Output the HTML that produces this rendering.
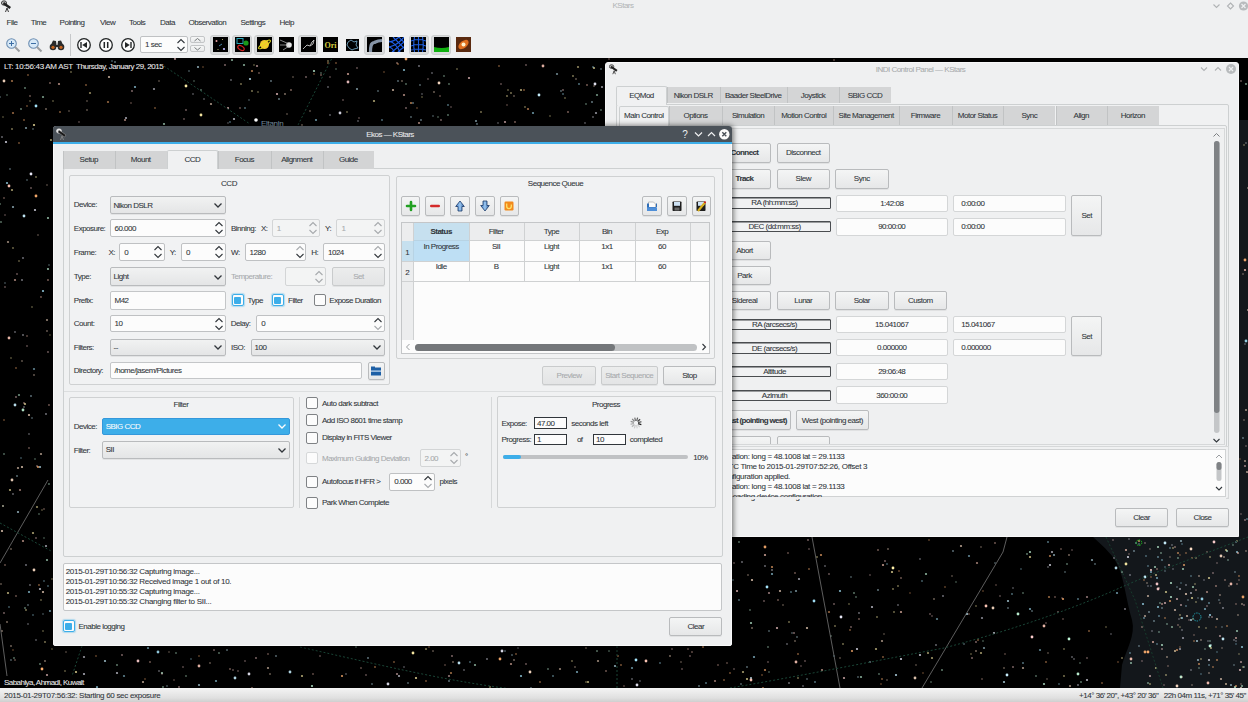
<!DOCTYPE html><html><head><meta charset="utf-8"><style>
html,body{margin:0;padding:0;}
body{width:1248px;height:702px;overflow:hidden;position:relative;background:#000;font-family:"Liberation Sans",sans-serif;font-size:8px;color:#31363b;}
div{position:absolute;}
.t{white-space:nowrap;line-height:12px;height:12px;letter-spacing:-0.5px;-webkit-text-stroke-width:0.08px;}
svg.a{position:absolute;}
</style></head><body>
<svg class="a" style="left:0;top:58px" width="1248" height="630" viewBox="0 58 1248 630"><rect x="0" y="58" width="1248" height="630" fill="#000"/><path d="M1093,520 L1093,537 C1105,548 1114,556 1118,566 C1124,578 1126,600 1132,620 C1136,635 1126,650 1122,665 L1120,688 L1248,688 L1248,520 Z" fill="#13171b"/><rect x="1239" y="120" width="9" height="420" fill="#13171b"/><circle cx="47" cy="331" r="0.9" fill="#ffe0c8" opacity="0.44"/><circle cx="234" cy="119" r="1.1" fill="#f0f0ff" opacity="0.74"/><circle cx="526" cy="664" r="0.9" fill="#ffd0d0" opacity="0.44"/><circle cx="1048" cy="653" r="0.9" fill="#ffe0c8" opacity="0.32"/><circle cx="1239" cy="576" r="0.9" fill="#ffb070" opacity="0.52"/><circle cx="433" cy="651" r="0.9" fill="#ffe0c8" opacity="0.42"/><circle cx="882" cy="679" r="0.9" fill="#ffb070" opacity="0.54"/><circle cx="328" cy="61" r="0.9" fill="#fff0a8" opacity="0.45"/><circle cx="1072" cy="657" r="0.9" fill="#f0f0ff" opacity="0.41"/><circle cx="1087" cy="658" r="0.9" fill="#ffd0d0" opacity="0.40"/><circle cx="498" cy="123" r="0.9" fill="#f0f0ff" opacity="0.35"/><circle cx="670" cy="656" r="0.9" fill="#ffe0c8" opacity="0.52"/><circle cx="1059" cy="684" r="0.9" fill="#a8e8ff" opacity="0.38"/><circle cx="256" cy="658" r="0.9" fill="#ffd0d0" opacity="0.53"/><circle cx="765" cy="555" r="1.1" fill="#ffc8b8" opacity="0.79"/><circle cx="444" cy="76" r="0.9" fill="#c8ffe0" opacity="0.42"/><circle cx="2" cy="631" r="0.9" fill="#ffe0c8" opacity="0.51"/><circle cx="174" cy="680" r="0.9" fill="#ffc8b8" opacity="0.31"/><circle cx="1032" cy="611" r="0.9" fill="#c8f0ff" opacity="0.43"/><circle cx="23" cy="335" r="0.9" fill="#f0f0ff" opacity="0.49"/><circle cx="969" cy="614" r="0.9" fill="#ffc8b8" opacity="0.37"/><circle cx="597" cy="651" r="0.9" fill="#c8ffe0" opacity="0.53"/><circle cx="881" cy="684" r="0.9" fill="#ffb070" opacity="0.35"/><circle cx="24" cy="407" r="0.9" fill="#f0f0ff" opacity="0.40"/><circle cx="1023" cy="593" r="0.9" fill="#c8ffe0" opacity="0.40"/><circle cx="336" cy="69" r="0.9" fill="#c8ffe0" opacity="0.32"/><circle cx="201" cy="90" r="0.9" fill="#c8ffe0" opacity="0.46"/><circle cx="1241" cy="81" r="0.9" fill="#ffd0d0" opacity="0.44"/><circle cx="858" cy="677" r="0.9" fill="#c8f0ff" opacity="0.40"/><circle cx="434" cy="92" r="0.9" fill="#ffe0c8" opacity="0.46"/><circle cx="5" cy="287" r="0.9" fill="#ffd0d0" opacity="0.38"/><circle cx="43" cy="614" r="0.9" fill="#c8f0ff" opacity="0.30"/><circle cx="330" cy="115" r="0.9" fill="#f0f0ff" opacity="0.40"/><circle cx="105" cy="661" r="1.1" fill="#c8f0ff" opacity="0.75"/><circle cx="894" cy="612" r="0.9" fill="#fff0a8" opacity="0.48"/><circle cx="20" cy="490" r="1.1" fill="#ffc8b8" opacity="0.58"/><circle cx="563" cy="90" r="0.9" fill="#ffd0d0" opacity="0.47"/><circle cx="923" cy="673" r="0.9" fill="#ffb070" opacity="0.32"/><circle cx="606" cy="671" r="0.9" fill="#ffc8b8" opacity="0.47"/><circle cx="249" cy="674" r="1.4" fill="#f0f0ff" opacity="0.89"/><circle cx="1241" cy="684" r="0.9" fill="#ffc8b8" opacity="0.32"/><circle cx="199" cy="656" r="0.9" fill="#ffb070" opacity="0.38"/><circle cx="2" cy="531" r="1.1" fill="#ffe0c8" opacity="0.83"/><circle cx="244" cy="65" r="1.1" fill="#c8ffe0" opacity="0.66"/><circle cx="490" cy="687" r="0.9" fill="#fff0a8" opacity="0.53"/><circle cx="943" cy="596" r="0.9" fill="#f0f0ff" opacity="0.51"/><circle cx="356" cy="647" r="0.9" fill="#c8ffe0" opacity="0.41"/><circle cx="36" cy="538" r="0.9" fill="#ffd0d0" opacity="0.44"/><circle cx="357" cy="89" r="1.1" fill="#c8f0ff" opacity="0.60"/><circle cx="252" cy="71" r="1.1" fill="#ffb070" opacity="0.67"/><circle cx="422" cy="97" r="0.9" fill="#fff0a8" opacity="0.33"/><circle cx="1191" cy="593" r="1.1" fill="#f0f0ff" opacity="0.59"/><circle cx="1004" cy="668" r="0.9" fill="#ffe0c8" opacity="0.40"/><circle cx="1157" cy="578" r="1.1" fill="#a8e8ff" opacity="0.62"/><circle cx="808" cy="540" r="0.9" fill="#ffd0d0" opacity="0.49"/><circle cx="2" cy="137" r="0.9" fill="#f0f0ff" opacity="0.46"/><circle cx="13" cy="248" r="0.9" fill="#fff0a8" opacity="0.46"/><circle cx="384" cy="72" r="0.9" fill="#ffb070" opacity="0.32"/><circle cx="8" cy="242" r="1.1" fill="#ffe0c8" opacity="0.61"/><circle cx="368" cy="658" r="0.9" fill="#c8f0ff" opacity="0.52"/><circle cx="29" cy="434" r="0.9" fill="#f0f0ff" opacity="0.35"/><circle cx="1047" cy="679" r="0.9" fill="#ffe0c8" opacity="0.30"/><circle cx="43" cy="97" r="1.1" fill="#c8ffe0" opacity="0.61"/><circle cx="1005" cy="654" r="0.9" fill="#ffc8b8" opacity="0.33"/><circle cx="969" cy="556" r="1.1" fill="#a8e8ff" opacity="0.59"/><circle cx="131" cy="103" r="0.9" fill="#ffc8b8" opacity="0.32"/><circle cx="815" cy="682" r="0.9" fill="#a8e8ff" opacity="0.52"/><circle cx="291" cy="90" r="0.9" fill="#ffc8b8" opacity="0.53"/><circle cx="971" cy="654" r="0.9" fill="#fff0a8" opacity="0.35"/><circle cx="254" cy="65" r="0.9" fill="#fff0a8" opacity="0.35"/><circle cx="79" cy="122" r="0.9" fill="#ffd0d0" opacity="0.34"/><circle cx="521" cy="90" r="1.1" fill="#fff0a8" opacity="0.67"/><circle cx="23" cy="541" r="1.1" fill="#ffc8b8" opacity="0.67"/><circle cx="505" cy="651" r="0.9" fill="#c8f0ff" opacity="0.41"/><circle cx="203" cy="67" r="0.9" fill="#ffb070" opacity="0.32"/><circle cx="158" cy="652" r="1.4" fill="#a8e8ff" opacity="0.90"/><circle cx="859" cy="619" r="0.9" fill="#ffc8b8" opacity="0.46"/><circle cx="52" cy="649" r="0.9" fill="#fff0a8" opacity="0.33"/><circle cx="48" cy="586" r="0.9" fill="#a8e8ff" opacity="0.44"/><circle cx="29" cy="448" r="0.9" fill="#ffc8b8" opacity="0.41"/><circle cx="772" cy="574" r="1.1" fill="#a8e8ff" opacity="0.67"/><circle cx="51" cy="140" r="1.1" fill="#fff0a8" opacity="0.78"/><circle cx="1070" cy="686" r="1.1" fill="#ffe0c8" opacity="0.61"/><circle cx="1194" cy="635" r="0.9" fill="#ffc8b8" opacity="0.32"/><circle cx="398" cy="81" r="0.9" fill="#c8f0ff" opacity="0.46"/><circle cx="768" cy="662" r="0.9" fill="#ffd0d0" opacity="0.36"/><circle cx="798" cy="678" r="0.9" fill="#fff0a8" opacity="0.48"/><circle cx="198" cy="67" r="1.1" fill="#c8f0ff" opacity="0.69"/><circle cx="1013" cy="667" r="0.9" fill="#ffd0d0" opacity="0.52"/><circle cx="0" cy="97" r="0.9" fill="#c8f0ff" opacity="0.36"/><circle cx="15" cy="405" r="1.4" fill="#c8f0ff" opacity="0.91"/><circle cx="1241" cy="514" r="0.9" fill="#ffd0d0" opacity="0.30"/><circle cx="48" cy="269" r="1.1" fill="#c8ffe0" opacity="0.76"/><circle cx="801" cy="666" r="0.9" fill="#ffd0d0" opacity="0.30"/><circle cx="928" cy="653" r="1.1" fill="#fff0a8" opacity="0.61"/><circle cx="1150" cy="676" r="1.1" fill="#ffd0d0" opacity="0.69"/><circle cx="34" cy="125" r="1.1" fill="#fff0a8" opacity="0.84"/><circle cx="53" cy="101" r="0.9" fill="#fff0a8" opacity="0.35"/><circle cx="829" cy="612" r="1.1" fill="#ffb070" opacity="0.58"/><circle cx="43" cy="592" r="1.1" fill="#ffe0c8" opacity="0.80"/><circle cx="125" cy="120" r="1.1" fill="#ffc8b8" opacity="0.64"/><circle cx="1136" cy="543" r="0.9" fill="#a8e8ff" opacity="0.51"/><circle cx="31" cy="188" r="0.9" fill="#ffd0d0" opacity="0.43"/><circle cx="878" cy="590" r="0.9" fill="#c8f0ff" opacity="0.54"/><circle cx="1192" cy="685" r="0.9" fill="#ffe0c8" opacity="0.35"/><circle cx="16" cy="596" r="0.9" fill="#ffc8b8" opacity="0.43"/><circle cx="901" cy="612" r="1.1" fill="#ffc8b8" opacity="0.75"/><circle cx="843" cy="644" r="0.9" fill="#fff0a8" opacity="0.49"/><circle cx="976" cy="651" r="0.9" fill="#ffe0c8" opacity="0.51"/><circle cx="594" cy="68" r="1.1" fill="#fff0a8" opacity="0.71"/><circle cx="512" cy="655" r="0.9" fill="#c8f0ff" opacity="0.40"/><circle cx="499" cy="66" r="0.9" fill="#ffb070" opacity="0.46"/><circle cx="500" cy="659" r="1.4" fill="#ffb070" opacity="0.92"/><circle cx="899" cy="571" r="0.9" fill="#ffb070" opacity="0.42"/><circle cx="232" cy="60" r="1.1" fill="#c8ffe0" opacity="0.66"/><circle cx="481" cy="112" r="0.9" fill="#fff0a8" opacity="0.50"/><circle cx="14" cy="658" r="0.9" fill="#c8ffe0" opacity="0.45"/><circle cx="531" cy="688" r="0.9" fill="#c8f0ff" opacity="0.46"/><circle cx="42" cy="510" r="0.9" fill="#fff0a8" opacity="0.32"/><circle cx="416" cy="678" r="1.1" fill="#fff0a8" opacity="0.84"/><circle cx="817" cy="557" r="0.9" fill="#fff0a8" opacity="0.48"/><circle cx="159" cy="671" r="0.9" fill="#f0f0ff" opacity="0.40"/><circle cx="135" cy="87" r="1.1" fill="#a8e8ff" opacity="0.73"/><circle cx="821" cy="555" r="1.1" fill="#ffb070" opacity="0.74"/><circle cx="46" cy="546" r="1.1" fill="#f0f0ff" opacity="0.66"/><circle cx="1027" cy="554" r="0.9" fill="#c8ffe0" opacity="0.52"/><circle cx="231" cy="80" r="0.9" fill="#f0f0ff" opacity="0.42"/><circle cx="741" cy="684" r="0.9" fill="#c8f0ff" opacity="0.42"/><circle cx="515" cy="122" r="0.9" fill="#ffc8b8" opacity="0.52"/><circle cx="12" cy="480" r="1.4" fill="#ffe0c8" opacity="0.88"/><circle cx="1111" cy="634" r="0.9" fill="#f0f0ff" opacity="0.30"/><circle cx="18" cy="468" r="1.1" fill="#ffe0c8" opacity="0.67"/><circle cx="1195" cy="584" r="0.9" fill="#fff0a8" opacity="0.39"/><circle cx="981" cy="653" r="1.1" fill="#fff0a8" opacity="0.64"/><circle cx="76" cy="672" r="1.1" fill="#fff0a8" opacity="0.81"/><circle cx="730" cy="673" r="0.9" fill="#ffb070" opacity="0.47"/><circle cx="751" cy="623" r="1.1" fill="#c8ffe0" opacity="0.76"/><circle cx="953" cy="551" r="0.9" fill="#c8f0ff" opacity="0.50"/><circle cx="936" cy="645" r="0.9" fill="#f0f0ff" opacity="0.47"/><circle cx="186" cy="86" r="1.4" fill="#fff0a8" opacity="0.98"/><circle cx="38" cy="235" r="0.9" fill="#ffe0c8" opacity="0.31"/><circle cx="1236" cy="604" r="0.9" fill="#ffc8b8" opacity="0.37"/><circle cx="1181" cy="541" r="1.1" fill="#c8f0ff" opacity="0.63"/><circle cx="47" cy="185" r="0.9" fill="#ffe0c8" opacity="0.31"/><circle cx="43" cy="291" r="1.1" fill="#a8e8ff" opacity="0.83"/><circle cx="150" cy="662" r="0.9" fill="#ffc8b8" opacity="0.46"/><circle cx="199" cy="666" r="1.4" fill="#ffc8b8" opacity="0.88"/><circle cx="1175" cy="651" r="0.9" fill="#ffd0d0" opacity="0.53"/><circle cx="807" cy="679" r="0.9" fill="#c8f0ff" opacity="0.38"/><circle cx="7" cy="183" r="1.1" fill="#a8e8ff" opacity="0.78"/><circle cx="45" cy="642" r="0.9" fill="#fff0a8" opacity="0.52"/><circle cx="277" cy="94" r="1.1" fill="#ffd0d0" opacity="0.82"/><circle cx="32" cy="418" r="0.9" fill="#c8f0ff" opacity="0.37"/><circle cx="983" cy="641" r="0.9" fill="#c8ffe0" opacity="0.33"/><circle cx="942" cy="670" r="0.9" fill="#c8ffe0" opacity="0.55"/><circle cx="366" cy="675" r="0.9" fill="#ffd0d0" opacity="0.39"/><circle cx="175" cy="59" r="1.1" fill="#ffd0d0" opacity="0.64"/><circle cx="449" cy="84" r="0.9" fill="#c8ffe0" opacity="0.44"/><circle cx="245" cy="108" r="0.9" fill="#a8e8ff" opacity="0.49"/><circle cx="13" cy="494" r="0.9" fill="#f0f0ff" opacity="0.43"/><circle cx="798" cy="654" r="0.9" fill="#ffb070" opacity="0.53"/><circle cx="892" cy="572" r="1.1" fill="#fff0a8" opacity="0.78"/><circle cx="557" cy="74" r="1.1" fill="#c8f0ff" opacity="0.56"/><circle cx="228" cy="123" r="0.9" fill="#f0f0ff" opacity="0.30"/><circle cx="438" cy="117" r="0.9" fill="#c8ffe0" opacity="0.33"/><circle cx="739" cy="600" r="0.9" fill="#a8e8ff" opacity="0.49"/><circle cx="1175" cy="547" r="0.9" fill="#ffc8b8" opacity="0.51"/><circle cx="893" cy="589" r="0.9" fill="#fff0a8" opacity="0.50"/><circle cx="646" cy="661" r="1.4" fill="#ffc8b8" opacity="0.98"/><circle cx="1245" cy="344" r="0.9" fill="#f0f0ff" opacity="0.31"/><circle cx="15" cy="280" r="1.1" fill="#ffc8b8" opacity="0.65"/><circle cx="71" cy="72" r="0.9" fill="#fff0a8" opacity="0.41"/><circle cx="769" cy="593" r="1.1" fill="#ffd0d0" opacity="0.58"/><circle cx="1069" cy="639" r="1.4" fill="#c8ffe0" opacity="0.97"/><circle cx="884" cy="634" r="0.9" fill="#ffe0c8" opacity="0.30"/><circle cx="621" cy="665" r="0.9" fill="#ffb070" opacity="0.51"/><circle cx="931" cy="682" r="0.9" fill="#c8ffe0" opacity="0.35"/><circle cx="1046" cy="662" r="0.9" fill="#ffb070" opacity="0.52"/><circle cx="579" cy="84" r="0.9" fill="#a8e8ff" opacity="0.54"/><circle cx="1243" cy="274" r="0.9" fill="#ffe0c8" opacity="0.34"/><circle cx="397" cy="674" r="1.1" fill="#ffd0d0" opacity="0.60"/><circle cx="429" cy="647" r="0.9" fill="#ffb070" opacity="0.46"/><circle cx="514" cy="96" r="0.9" fill="#ffe0c8" opacity="0.39"/><circle cx="1240" cy="459" r="0.9" fill="#ffb070" opacity="0.30"/><circle cx="3" cy="506" r="0.9" fill="#c8ffe0" opacity="0.40"/><circle cx="123" cy="68" r="0.9" fill="#c8f0ff" opacity="0.42"/><circle cx="1244" cy="420" r="0.9" fill="#ffe0c8" opacity="0.34"/><circle cx="36" cy="106" r="1.4" fill="#a8e8ff" opacity="0.97"/><circle cx="765" cy="566" r="0.9" fill="#f0f0ff" opacity="0.47"/><circle cx="41" cy="454" r="1.1" fill="#ffe0c8" opacity="0.65"/><circle cx="727" cy="663" r="0.9" fill="#ffc8b8" opacity="0.36"/><circle cx="1122" cy="572" r="0.9" fill="#c8ffe0" opacity="0.54"/><circle cx="618" cy="656" r="0.9" fill="#ffb070" opacity="0.47"/><circle cx="28" cy="605" r="0.9" fill="#c8f0ff" opacity="0.39"/><circle cx="233" cy="670" r="0.9" fill="#ffd0d0" opacity="0.39"/><circle cx="348" cy="74" r="1.1" fill="#ffc8b8" opacity="0.76"/><circle cx="470" cy="662" r="0.9" fill="#a8e8ff" opacity="0.43"/><circle cx="967" cy="614" r="1.1" fill="#c8f0ff" opacity="0.83"/><circle cx="1248" cy="310" r="1.1" fill="#ffe0c8" opacity="0.60"/><circle cx="50" cy="83" r="0.9" fill="#ffc8b8" opacity="0.49"/><circle cx="1125" cy="609" r="0.9" fill="#f0f0ff" opacity="0.54"/><circle cx="1246" cy="446" r="0.9" fill="#ffd0d0" opacity="0.32"/><circle cx="922" cy="581" r="0.9" fill="#a8e8ff" opacity="0.43"/><circle cx="840" cy="591" r="1.1" fill="#a8e8ff" opacity="0.78"/><circle cx="682" cy="669" r="0.9" fill="#ffd0d0" opacity="0.37"/><circle cx="433" cy="116" r="0.9" fill="#c8f0ff" opacity="0.33"/><circle cx="956" cy="582" r="0.9" fill="#c8ffe0" opacity="0.30"/><circle cx="805" cy="661" r="0.9" fill="#ffd0d0" opacity="0.38"/><circle cx="448" cy="115" r="0.9" fill="#c8ffe0" opacity="0.46"/><circle cx="32" cy="307" r="0.9" fill="#fff0a8" opacity="0.35"/><circle cx="796" cy="591" r="1.1" fill="#c8f0ff" opacity="0.58"/><circle cx="1148" cy="586" r="0.9" fill="#f0f0ff" opacity="0.31"/><circle cx="1130" cy="653" r="0.9" fill="#a8e8ff" opacity="0.48"/><circle cx="1243" cy="438" r="0.9" fill="#c8f0ff" opacity="0.47"/><circle cx="50" cy="335" r="0.9" fill="#fff0a8" opacity="0.30"/><circle cx="1049" cy="597" r="1.1" fill="#ffb070" opacity="0.59"/><circle cx="90" cy="93" r="1.1" fill="#fff0a8" opacity="0.57"/><circle cx="11" cy="660" r="0.9" fill="#c8f0ff" opacity="0.39"/><circle cx="5" cy="565" r="0.9" fill="#ffc8b8" opacity="0.42"/><circle cx="791" cy="592" r="0.9" fill="#a8e8ff" opacity="0.47"/><circle cx="692" cy="652" r="0.9" fill="#ffc8b8" opacity="0.44"/><circle cx="143" cy="682" r="1.1" fill="#ffe0c8" opacity="0.69"/><circle cx="593" cy="117" r="0.9" fill="#f0f0ff" opacity="0.40"/><circle cx="59" cy="84" r="1.1" fill="#ffc8b8" opacity="0.69"/><circle cx="1050" cy="565" r="1.1" fill="#f0f0ff" opacity="0.80"/><circle cx="920" cy="655" r="1.1" fill="#f0f0ff" opacity="0.79"/><circle cx="43" cy="631" r="0.9" fill="#fff0a8" opacity="0.35"/><circle cx="26" cy="128" r="1.1" fill="#c8f0ff" opacity="0.60"/><circle cx="1162" cy="608" r="0.9" fill="#c8f0ff" opacity="0.45"/><circle cx="312" cy="686" r="1.1" fill="#c8ffe0" opacity="0.83"/><circle cx="17" cy="274" r="0.9" fill="#ffd0d0" opacity="0.42"/><circle cx="39" cy="585" r="0.9" fill="#ffb070" opacity="0.51"/><circle cx="79" cy="683" r="0.9" fill="#ffd0d0" opacity="0.45"/><circle cx="1142" cy="627" r="0.9" fill="#ffc8b8" opacity="0.49"/><circle cx="993" cy="608" r="1.4" fill="#ffe0c8" opacity="0.90"/><circle cx="507" cy="96" r="0.9" fill="#fff0a8" opacity="0.52"/><circle cx="1116" cy="568" r="1.4" fill="#c8f0ff" opacity="0.87"/><circle cx="9" cy="607" r="0.9" fill="#a8e8ff" opacity="0.40"/><circle cx="964" cy="644" r="0.9" fill="#c8f0ff" opacity="0.38"/><circle cx="688" cy="649" r="0.9" fill="#ffc8b8" opacity="0.45"/><circle cx="724" cy="680" r="0.9" fill="#ffb070" opacity="0.48"/><circle cx="1151" cy="586" r="0.9" fill="#c8f0ff" opacity="0.37"/><circle cx="321" cy="73" r="0.9" fill="#c8ffe0" opacity="0.36"/><circle cx="25" cy="88" r="0.9" fill="#c8ffe0" opacity="0.52"/><circle cx="916" cy="665" r="0.9" fill="#ffe0c8" opacity="0.32"/><circle cx="19" cy="261" r="0.9" fill="#fff0a8" opacity="0.38"/><circle cx="422" cy="94" r="0.9" fill="#f0f0ff" opacity="0.32"/><circle cx="765" cy="547" r="1.4" fill="#ffb070" opacity="0.89"/><circle cx="578" cy="67" r="1.1" fill="#fff0a8" opacity="0.57"/><circle cx="411" cy="117" r="0.9" fill="#c8f0ff" opacity="0.43"/><circle cx="849" cy="604" r="0.9" fill="#fff0a8" opacity="0.36"/><circle cx="772" cy="570" r="0.9" fill="#f0f0ff" opacity="0.49"/><circle cx="11" cy="358" r="0.9" fill="#fff0a8" opacity="0.34"/><circle cx="1222" cy="648" r="0.9" fill="#ffe0c8" opacity="0.32"/><circle cx="227" cy="650" r="0.9" fill="#c8f0ff" opacity="0.53"/><circle cx="1087" cy="597" r="1.1" fill="#ffd0d0" opacity="0.56"/><circle cx="372" cy="684" r="0.9" fill="#c8f0ff" opacity="0.42"/><circle cx="1165" cy="543" r="1.4" fill="#c8f0ff" opacity="0.97"/><circle cx="1078" cy="685" r="0.9" fill="#f0f0ff" opacity="0.50"/><circle cx="19" cy="143" r="0.9" fill="#ffb070" opacity="0.47"/><circle cx="138" cy="661" r="1.4" fill="#ffd0d0" opacity="0.91"/><circle cx="268" cy="668" r="1.1" fill="#ffe0c8" opacity="0.63"/><circle cx="86" cy="85" r="0.9" fill="#ffb070" opacity="0.50"/><circle cx="406" cy="84" r="0.9" fill="#c8ffe0" opacity="0.44"/><circle cx="861" cy="677" r="1.1" fill="#c8ffe0" opacity="0.67"/><circle cx="179" cy="687" r="0.9" fill="#ffd0d0" opacity="0.53"/><circle cx="1052" cy="552" r="1.1" fill="#f0f0ff" opacity="0.67"/><circle cx="1030" cy="557" r="1.1" fill="#fff0a8" opacity="0.76"/><circle cx="799" cy="579" r="1.1" fill="#f0f0ff" opacity="0.65"/><circle cx="1" cy="222" r="0.9" fill="#c8ffe0" opacity="0.48"/><circle cx="809" cy="569" r="0.9" fill="#ffb070" opacity="0.51"/><circle cx="1220" cy="595" r="0.9" fill="#ffe0c8" opacity="0.47"/><circle cx="411" cy="103" r="1.1" fill="#ffb070" opacity="0.67"/><circle cx="518" cy="648" r="0.9" fill="#f0f0ff" opacity="0.33"/><circle cx="703" cy="647" r="1.1" fill="#ffb070" opacity="0.67"/><circle cx="501" cy="84" r="0.9" fill="#ffd0d0" opacity="0.38"/><circle cx="508" cy="90" r="0.9" fill="#fff0a8" opacity="0.38"/><circle cx="524" cy="90" r="0.9" fill="#ffb070" opacity="0.50"/><circle cx="252" cy="91" r="0.9" fill="#fff0a8" opacity="0.53"/><circle cx="84" cy="657" r="1.1" fill="#f0f0ff" opacity="0.63"/><circle cx="887" cy="564" r="0.9" fill="#a8e8ff" opacity="0.40"/><circle cx="18" cy="512" r="1.1" fill="#c8f0ff" opacity="0.70"/><circle cx="126" cy="118" r="1.1" fill="#f0f0ff" opacity="0.67"/><circle cx="193" cy="94" r="0.9" fill="#f0f0ff" opacity="0.34"/><circle cx="1092" cy="560" r="1.1" fill="#c8f0ff" opacity="0.64"/><circle cx="268" cy="654" r="0.9" fill="#ffc8b8" opacity="0.40"/><circle cx="41" cy="297" r="0.9" fill="#ffc8b8" opacity="0.46"/><circle cx="48" cy="280" r="0.9" fill="#ffc8b8" opacity="0.55"/><circle cx="747" cy="667" r="0.9" fill="#c8f0ff" opacity="0.46"/><circle cx="576" cy="79" r="0.9" fill="#ffe0c8" opacity="0.40"/><circle cx="112" cy="61" r="0.9" fill="#a8e8ff" opacity="0.38"/><circle cx="320" cy="656" r="0.9" fill="#ffd0d0" opacity="0.35"/><circle cx="330" cy="77" r="0.9" fill="#ffd0d0" opacity="0.33"/><circle cx="421" cy="120" r="0.9" fill="#c8f0ff" opacity="0.50"/><circle cx="13" cy="650" r="0.9" fill="#ffb070" opacity="0.31"/><circle cx="995" cy="543" r="0.9" fill="#ffc8b8" opacity="0.47"/><circle cx="4" cy="613" r="0.9" fill="#ffd0d0" opacity="0.49"/><circle cx="780" cy="591" r="1.1" fill="#ffe0c8" opacity="0.75"/><circle cx="378" cy="91" r="0.9" fill="#c8f0ff" opacity="0.41"/><circle cx="1030" cy="552" r="1.1" fill="#c8ffe0" opacity="0.77"/><circle cx="977" cy="563" r="1.1" fill="#ffc8b8" opacity="0.62"/><circle cx="1165" cy="618" r="0.9" fill="#ffb070" opacity="0.50"/><circle cx="852" cy="651" r="1.1" fill="#ffb070" opacity="0.83"/><circle cx="754" cy="657" r="1.1" fill="#a8e8ff" opacity="0.68"/><circle cx="825" cy="566" r="0.9" fill="#f0f0ff" opacity="0.39"/><circle cx="1018" cy="614" r="1.4" fill="#c8ffe0" opacity="0.92"/><circle cx="219" cy="653" r="0.9" fill="#c8ffe0" opacity="0.48"/><circle cx="844" cy="678" r="1.1" fill="#ffd0d0" opacity="0.75"/><circle cx="857" cy="649" r="1.1" fill="#f0f0ff" opacity="0.82"/><circle cx="937" cy="619" r="1.1" fill="#a8e8ff" opacity="0.56"/><circle cx="1189" cy="620" r="0.9" fill="#ffd0d0" opacity="0.31"/><circle cx="475" cy="665" r="1.1" fill="#c8ffe0" opacity="0.65"/><circle cx="850" cy="630" r="0.9" fill="#ffb070" opacity="0.49"/><circle cx="1012" cy="594" r="0.9" fill="#a8e8ff" opacity="0.49"/><circle cx="52" cy="579" r="0.9" fill="#fff0a8" opacity="0.45"/><circle cx="449" cy="676" r="1.1" fill="#ffd0d0" opacity="0.58"/><circle cx="752" cy="580" r="1.1" fill="#ffe0c8" opacity="0.83"/><circle cx="1050" cy="556" r="1.1" fill="#ffb070" opacity="0.67"/><circle cx="835" cy="626" r="0.9" fill="#fff0a8" opacity="0.47"/><circle cx="4" cy="420" r="0.9" fill="#ffb070" opacity="0.40"/><circle cx="1054" cy="555" r="1.1" fill="#c8f0ff" opacity="0.62"/><circle cx="42" cy="669" r="1.4" fill="#ffb070" opacity="0.98"/><circle cx="343" cy="100" r="0.9" fill="#ffd0d0" opacity="0.37"/><circle cx="1217" cy="563" r="0.9" fill="#ffd0d0" opacity="0.32"/><circle cx="4" cy="454" r="0.9" fill="#c8ffe0" opacity="0.43"/><circle cx="1168" cy="666" r="0.9" fill="#ffc8b8" opacity="0.35"/><circle cx="1048" cy="567" r="0.9" fill="#f0f0ff" opacity="0.36"/><circle cx="487" cy="659" r="0.9" fill="#f0f0ff" opacity="0.50"/><circle cx="1183" cy="638" r="1.1" fill="#f0f0ff" opacity="0.57"/><circle cx="257" cy="66" r="1.1" fill="#ffd0d0" opacity="0.63"/><circle cx="789" cy="683" r="0.9" fill="#f0f0ff" opacity="0.48"/><circle cx="37" cy="507" r="1.1" fill="#fff0a8" opacity="0.58"/><circle cx="588" cy="682" r="1.1" fill="#fff0a8" opacity="0.69"/><circle cx="314" cy="71" r="1.1" fill="#c8ffe0" opacity="0.83"/><circle cx="1013" cy="588" r="0.9" fill="#f0f0ff" opacity="0.33"/><circle cx="34" cy="570" r="1.4" fill="#ffe0c8" opacity="0.92"/><circle cx="477" cy="124" r="0.9" fill="#c8f0ff" opacity="0.54"/><circle cx="814" cy="601" r="1.4" fill="#a8e8ff" opacity="0.95"/><circle cx="117" cy="673" r="1.1" fill="#f0f0ff" opacity="0.69"/><circle cx="502" cy="651" r="1.4" fill="#f0f0ff" opacity="0.99"/><circle cx="797" cy="637" r="0.9" fill="#c8f0ff" opacity="0.42"/><circle cx="598" cy="661" r="1.1" fill="#ffe0c8" opacity="0.61"/><circle cx="982" cy="618" r="1.1" fill="#f0f0ff" opacity="0.57"/><circle cx="37" cy="466" r="0.9" fill="#ffd0d0" opacity="0.45"/><circle cx="742" cy="562" r="0.9" fill="#f0f0ff" opacity="0.47"/><circle cx="240" cy="108" r="0.9" fill="#ffc8b8" opacity="0.43"/><circle cx="994" cy="633" r="1.1" fill="#f0f0ff" opacity="0.75"/><circle cx="983" cy="591" r="0.9" fill="#ffb070" opacity="0.32"/><circle cx="553" cy="676" r="0.9" fill="#a8e8ff" opacity="0.49"/><circle cx="1044" cy="684" r="1.1" fill="#c8ffe0" opacity="0.79"/><circle cx="16" cy="397" r="0.9" fill="#ffd0d0" opacity="0.52"/><circle cx="961" cy="546" r="1.1" fill="#ffe0c8" opacity="0.71"/><circle cx="672" cy="649" r="0.9" fill="#ffd0d0" opacity="0.47"/><circle cx="321" cy="75" r="0.9" fill="#ffc8b8" opacity="0.46"/><circle cx="87" cy="101" r="0.9" fill="#ffe0c8" opacity="0.32"/><circle cx="84" cy="67" r="0.9" fill="#c8f0ff" opacity="0.44"/><circle cx="216" cy="681" r="1.1" fill="#a8e8ff" opacity="0.65"/><circle cx="1067" cy="564" r="0.9" fill="#c8ffe0" opacity="0.46"/><circle cx="328" cy="87" r="0.9" fill="#f0f0ff" opacity="0.40"/><circle cx="279" cy="99" r="0.9" fill="#c8f0ff" opacity="0.53"/><circle cx="1089" cy="631" r="0.9" fill="#ffb070" opacity="0.53"/><circle cx="38" cy="467" r="1.1" fill="#ffb070" opacity="0.81"/><circle cx="328" cy="63" r="0.9" fill="#ffb070" opacity="0.51"/><circle cx="293" cy="77" r="0.9" fill="#ffe0c8" opacity="0.33"/><circle cx="1152" cy="631" r="0.9" fill="#f0f0ff" opacity="0.33"/><circle cx="586" cy="648" r="0.9" fill="#ffe0c8" opacity="0.43"/><circle cx="763" cy="688" r="1.1" fill="#ffb070" opacity="0.58"/><circle cx="225" cy="65" r="0.9" fill="#ffd0d0" opacity="0.53"/><circle cx="40" cy="467" r="1.1" fill="#c8f0ff" opacity="0.75"/><circle cx="271" cy="81" r="0.9" fill="#c8f0ff" opacity="0.51"/><circle cx="249" cy="100" r="0.9" fill="#c8f0ff" opacity="0.30"/><circle cx="252" cy="688" r="0.9" fill="#ffc8b8" opacity="0.54"/><circle cx="1246" cy="143" r="0.9" fill="#f0f0ff" opacity="0.34"/><circle cx="528" cy="109" r="1.1" fill="#ffb070" opacity="0.63"/><circle cx="1023" cy="668" r="1.1" fill="#ffe0c8" opacity="0.64"/><circle cx="1207" cy="606" r="0.9" fill="#ffd0d0" opacity="0.39"/><circle cx="514" cy="660" r="0.9" fill="#ffe0c8" opacity="0.48"/><circle cx="1193" cy="619" r="0.9" fill="#fff0a8" opacity="0.50"/><circle cx="511" cy="664" r="1.1" fill="#ffc8b8" opacity="0.66"/><circle cx="1245" cy="461" r="1.1" fill="#ffe0c8" opacity="0.56"/><circle cx="525" cy="107" r="0.9" fill="#fff0a8" opacity="0.44"/><circle cx="601" cy="69" r="0.9" fill="#c8f0ff" opacity="0.40"/><circle cx="739" cy="542" r="0.9" fill="#c8ffe0" opacity="0.46"/><circle cx="204" cy="99" r="0.9" fill="#f0f0ff" opacity="0.35"/><circle cx="19" cy="395" r="1.1" fill="#c8ffe0" opacity="0.56"/><circle cx="996" cy="585" r="0.9" fill="#ffc8b8" opacity="0.30"/><circle cx="887" cy="680" r="0.9" fill="#ffe0c8" opacity="0.32"/><circle cx="586" cy="104" r="0.9" fill="#c8ffe0" opacity="0.40"/><circle cx="69" cy="111" r="0.9" fill="#ffe0c8" opacity="0.32"/><circle cx="65" cy="671" r="0.9" fill="#fff0a8" opacity="0.39"/><circle cx="995" cy="563" r="0.9" fill="#c8f0ff" opacity="0.35"/><circle cx="883" cy="565" r="1.1" fill="#ffc8b8" opacity="0.74"/><circle cx="543" cy="66" r="1.4" fill="#ffc8b8" opacity="0.87"/><circle cx="39" cy="514" r="0.9" fill="#c8ffe0" opacity="0.35"/><circle cx="1231" cy="685" r="1.1" fill="#c8f0ff" opacity="0.60"/><circle cx="1196" cy="558" r="0.9" fill="#fff0a8" opacity="0.43"/><circle cx="306" cy="77" r="0.9" fill="#ffd0d0" opacity="0.48"/><circle cx="1064" cy="649" r="0.9" fill="#fff0a8" opacity="0.43"/><circle cx="393" cy="90" r="1.1" fill="#ffe0c8" opacity="0.74"/><circle cx="348" cy="82" r="1.4" fill="#ffd0d0" opacity="0.87"/><circle cx="374" cy="101" r="1.1" fill="#fff0a8" opacity="0.68"/><circle cx="117" cy="665" r="0.9" fill="#c8ffe0" opacity="0.53"/><circle cx="1177" cy="650" r="1.1" fill="#ffb070" opacity="0.69"/><circle cx="586" cy="682" r="0.9" fill="#fff0a8" opacity="0.38"/><circle cx="910" cy="593" r="0.9" fill="#ffb070" opacity="0.31"/><circle cx="0" cy="204" r="0.9" fill="#c8ffe0" opacity="0.45"/><circle cx="1122" cy="658" r="0.9" fill="#fff0a8" opacity="0.50"/><circle cx="1004" cy="682" r="1.1" fill="#c8f0ff" opacity="0.79"/><circle cx="1058" cy="612" r="0.9" fill="#ffd0d0" opacity="0.46"/><circle cx="976" cy="606" r="0.9" fill="#fff0a8" opacity="0.39"/><circle cx="1106" cy="627" r="0.9" fill="#fff0a8" opacity="0.32"/><circle cx="789" cy="622" r="0.9" fill="#fff0a8" opacity="0.48"/><circle cx="733" cy="580" r="0.9" fill="#a8e8ff" opacity="0.41"/><circle cx="15" cy="660" r="0.9" fill="#ffc8b8" opacity="0.39"/><circle cx="453" cy="662" r="0.9" fill="#ffe0c8" opacity="0.46"/><circle cx="163" cy="687" r="0.9" fill="#c8ffe0" opacity="0.51"/><circle cx="1102" cy="683" r="0.9" fill="#ffb070" opacity="0.46"/><circle cx="408" cy="683" r="0.9" fill="#c8f0ff" opacity="0.42"/><circle cx="22" cy="467" r="1.1" fill="#ffe0c8" opacity="0.81"/><circle cx="259" cy="73" r="0.9" fill="#ffc8b8" opacity="0.43"/><circle cx="115" cy="62" r="0.9" fill="#c8f0ff" opacity="0.49"/><circle cx="752" cy="628" r="0.9" fill="#ffe0c8" opacity="0.49"/><circle cx="108" cy="102" r="1.1" fill="#ffb070" opacity="0.59"/><circle cx="1245" cy="270" r="1.1" fill="#ffc8b8" opacity="0.85"/><circle cx="1048" cy="542" r="0.9" fill="#a8e8ff" opacity="0.54"/><circle cx="211" cy="104" r="1.1" fill="#ffe0c8" opacity="0.67"/><circle cx="8" cy="593" r="1.1" fill="#fff0a8" opacity="0.70"/><circle cx="25" cy="404" r="1.1" fill="#fff0a8" opacity="0.74"/><circle cx="27" cy="180" r="0.9" fill="#c8f0ff" opacity="0.34"/><circle cx="285" cy="94" r="0.9" fill="#ffe0c8" opacity="0.54"/><circle cx="934" cy="599" r="0.9" fill="#ffe0c8" opacity="0.46"/><circle cx="49" cy="265" r="0.9" fill="#c8f0ff" opacity="0.33"/><circle cx="290" cy="672" r="1.4" fill="#c8f0ff" opacity="0.87"/><circle cx="1114" cy="558" r="0.9" fill="#f0f0ff" opacity="0.41"/><circle cx="777" cy="628" r="1.1" fill="#ffd0d0" opacity="0.79"/><circle cx="1177" cy="599" r="1.1" fill="#ffd0d0" opacity="0.70"/><circle cx="876" cy="649" r="1.1" fill="#fff0a8" opacity="0.67"/><circle cx="1198" cy="660" r="1.1" fill="#c8f0ff" opacity="0.64"/><circle cx="1128" cy="557" r="1.1" fill="#f0f0ff" opacity="0.85"/><circle cx="1148" cy="652" r="1.4" fill="#ffb070" opacity="0.97"/><circle cx="870" cy="662" r="0.9" fill="#c8f0ff" opacity="0.50"/><circle cx="1062" cy="598" r="0.9" fill="#ffd0d0" opacity="0.31"/><circle cx="596" cy="113" r="1.1" fill="#f0f0ff" opacity="0.61"/><circle cx="750" cy="610" r="0.9" fill="#c8ffe0" opacity="0.39"/><circle cx="765" cy="670" r="1.1" fill="#ffb070" opacity="0.71"/><circle cx="1201" cy="640" r="0.9" fill="#ffe0c8" opacity="0.44"/><circle cx="459" cy="663" r="1.4" fill="#c8f0ff" opacity="0.92"/><circle cx="572" cy="661" r="0.9" fill="#fff0a8" opacity="0.44"/><circle cx="452" cy="656" r="0.9" fill="#ffd0d0" opacity="0.54"/><circle cx="358" cy="121" r="0.9" fill="#f0f0ff" opacity="0.37"/><circle cx="715" cy="681" r="1.1" fill="#ffc8b8" opacity="0.58"/><circle cx="404" cy="667" r="0.9" fill="#f0f0ff" opacity="0.32"/><circle cx="1036" cy="676" r="0.9" fill="#c8ffe0" opacity="0.43"/><circle cx="28" cy="75" r="0.9" fill="#ffb070" opacity="0.46"/><circle cx="734" cy="563" r="0.9" fill="#ffd0d0" opacity="0.44"/><circle cx="7" cy="622" r="0.9" fill="#ffe0c8" opacity="0.51"/><circle cx="595" cy="84" r="1.4" fill="#f0f0ff" opacity="0.92"/><circle cx="87" cy="110" r="0.9" fill="#ffe0c8" opacity="0.38"/><circle cx="926" cy="574" r="1.1" fill="#c8ffe0" opacity="0.70"/><circle cx="419" cy="123" r="1.1" fill="#ffc8b8" opacity="0.70"/><circle cx="4" cy="198" r="0.9" fill="#ffc8b8" opacity="0.40"/><circle cx="47" cy="320" r="1.1" fill="#ffe0c8" opacity="0.60"/><circle cx="1236" cy="638" r="0.9" fill="#ffd0d0" opacity="0.47"/><circle cx="316" cy="120" r="1.1" fill="#a8e8ff" opacity="0.64"/><circle cx="1165" cy="571" r="0.9" fill="#c8f0ff" opacity="0.32"/><circle cx="31" cy="174" r="1.4" fill="#f0f0ff" opacity="0.97"/><circle cx="276" cy="656" r="0.9" fill="#c8f0ff" opacity="0.47"/><circle cx="346" cy="674" r="0.9" fill="#f0f0ff" opacity="0.33"/><circle cx="737" cy="591" r="1.1" fill="#ffd0d0" opacity="0.81"/><circle cx="734" cy="669" r="0.9" fill="#ffd0d0" opacity="0.35"/><circle cx="878" cy="550" r="0.9" fill="#ffc8b8" opacity="0.48"/><circle cx="568" cy="112" r="0.9" fill="#ffc8b8" opacity="0.51"/><circle cx="457" cy="69" r="0.9" fill="#fff0a8" opacity="0.39"/><circle cx="40" cy="664" r="0.9" fill="#c8ffe0" opacity="0.50"/><circle cx="1117" cy="593" r="1.1" fill="#a8e8ff" opacity="0.64"/><circle cx="440" cy="96" r="0.9" fill="#ffc8b8" opacity="0.38"/><circle cx="1063" cy="619" r="0.9" fill="#ffc8b8" opacity="0.34"/><circle cx="637" cy="685" r="1.4" fill="#f0f0ff" opacity="0.91"/><circle cx="44" cy="509" r="0.9" fill="#ffc8b8" opacity="0.37"/><circle cx="402" cy="81" r="0.9" fill="#ffe0c8" opacity="0.43"/><circle cx="145" cy="679" r="0.9" fill="#ffb070" opacity="0.36"/><circle cx="47" cy="560" r="1.1" fill="#c8ffe0" opacity="0.69"/><circle cx="17" cy="476" r="0.9" fill="#c8f0ff" opacity="0.49"/><circle cx="3" cy="117" r="0.9" fill="#fff0a8" opacity="0.30"/><circle cx="28" cy="624" r="0.9" fill="#f0f0ff" opacity="0.34"/><circle cx="36" cy="196" r="1.4" fill="#ffb070" opacity="0.95"/><circle cx="560" cy="669" r="1.1" fill="#ffe0c8" opacity="0.57"/><circle cx="7" cy="95" r="0.9" fill="#c8ffe0" opacity="0.32"/><circle cx="764" cy="601" r="0.9" fill="#ffd0d0" opacity="0.42"/><circle cx="245" cy="661" r="0.9" fill="#ffd0d0" opacity="0.36"/><circle cx="33" cy="533" r="1.1" fill="#fff0a8" opacity="0.67"/><circle cx="1139" cy="646" r="0.9" fill="#c8f0ff" opacity="0.41"/><circle cx="230" cy="669" r="0.9" fill="#ffc8b8" opacity="0.46"/><circle cx="1008" cy="608" r="0.9" fill="#c8f0ff" opacity="0.44"/><circle cx="840" cy="658" r="0.9" fill="#ffe0c8" opacity="0.34"/><circle cx="124" cy="676" r="1.1" fill="#a8e8ff" opacity="0.56"/><circle cx="310" cy="111" r="0.9" fill="#ffe0c8" opacity="0.37"/><circle cx="772" cy="567" r="1.1" fill="#ffb070" opacity="0.73"/><circle cx="1130" cy="575" r="0.9" fill="#f0f0ff" opacity="0.44"/><circle cx="27" cy="336" r="0.9" fill="#ffc8b8" opacity="0.38"/><circle cx="375" cy="667" r="0.9" fill="#ffb070" opacity="0.53"/><circle cx="21" cy="109" r="0.9" fill="#c8ffe0" opacity="0.53"/><circle cx="1021" cy="569" r="0.9" fill="#a8e8ff" opacity="0.32"/><circle cx="34" cy="375" r="0.9" fill="#ffe0c8" opacity="0.44"/><circle cx="361" cy="668" r="0.9" fill="#ffc8b8" opacity="0.38"/><circle cx="27" cy="346" r="0.9" fill="#ffd0d0" opacity="0.37"/><circle cx="342" cy="676" r="1.1" fill="#ffb070" opacity="0.83"/><circle cx="1245" cy="466" r="1.1" fill="#ffd0d0" opacity="0.55"/><circle cx="1118" cy="662" r="0.9" fill="#ffb070" opacity="0.35"/><circle cx="46" cy="109" r="0.9" fill="#ffe0c8" opacity="0.48"/><circle cx="1171" cy="583" r="1.1" fill="#c8ffe0" opacity="0.82"/><circle cx="751" cy="678" r="1.1" fill="#c8f0ff" opacity="0.80"/><circle cx="15" cy="332" r="0.9" fill="#f0f0ff" opacity="0.41"/><circle cx="788" cy="553" r="0.9" fill="#ffc8b8" opacity="0.40"/><circle cx="40" cy="589" r="1.1" fill="#f0f0ff" opacity="0.74"/><circle cx="201" cy="115" r="1.4" fill="#fff0a8" opacity="0.94"/><circle cx="1151" cy="570" r="0.9" fill="#fff0a8" opacity="0.31"/><circle cx="48" cy="218" r="1.1" fill="#c8ffe0" opacity="0.75"/><circle cx="1170" cy="548" r="0.9" fill="#a8e8ff" opacity="0.42"/><circle cx="602" cy="87" r="1.1" fill="#f0f0ff" opacity="0.60"/><circle cx="22" cy="361" r="0.9" fill="#ffe0c8" opacity="0.40"/><circle cx="1061" cy="549" r="0.9" fill="#ffc8b8" opacity="0.38"/><circle cx="12" cy="81" r="1.1" fill="#ffb070" opacity="0.61"/><circle cx="419" cy="66" r="0.9" fill="#f0f0ff" opacity="0.51"/><circle cx="394" cy="662" r="0.9" fill="#ffb070" opacity="0.46"/><circle cx="505" cy="122" r="1.1" fill="#ffd0d0" opacity="0.73"/><circle cx="1087" cy="680" r="1.1" fill="#f0f0ff" opacity="0.73"/><circle cx="834" cy="60" r="0.9" fill="#ffc8b8" opacity="0.39"/><circle cx="585" cy="123" r="0.9" fill="#f0f0ff" opacity="0.38"/><circle cx="706" cy="683" r="0.9" fill="#a8e8ff" opacity="0.52"/><circle cx="896" cy="675" r="1.1" fill="#c8f0ff" opacity="0.84"/><circle cx="972" cy="658" r="0.9" fill="#ffd0d0" opacity="0.52"/><circle cx="1" cy="584" r="0.9" fill="#ffe0c8" opacity="0.38"/><circle cx="50" cy="611" r="1.1" fill="#a8e8ff" opacity="0.70"/><circle cx="1173" cy="569" r="0.9" fill="#f0f0ff" opacity="0.31"/><circle cx="1007" cy="675" r="1.4" fill="#c8f0ff" opacity="0.99"/><circle cx="854" cy="593" r="0.9" fill="#c8ffe0" opacity="0.50"/><circle cx="25" cy="608" r="0.9" fill="#c8ffe0" opacity="0.49"/><circle cx="382" cy="120" r="0.9" fill="#a8e8ff" opacity="0.50"/><circle cx="66" cy="652" r="0.9" fill="#ffe0c8" opacity="0.31"/><circle cx="540" cy="682" r="0.9" fill="#ffb070" opacity="0.51"/><circle cx="885" cy="561" r="0.9" fill="#ffd0d0" opacity="0.50"/><circle cx="214" cy="650" r="0.9" fill="#ffd0d0" opacity="0.55"/><circle cx="1247" cy="519" r="0.9" fill="#a8e8ff" opacity="0.44"/><circle cx="258" cy="92" r="0.9" fill="#fff0a8" opacity="0.37"/><circle cx="155" cy="108" r="0.9" fill="#ffb070" opacity="0.46"/><circle cx="238" cy="671" r="0.9" fill="#ffd0d0" opacity="0.36"/><circle cx="398" cy="64" r="0.9" fill="#ffb070" opacity="0.50"/><circle cx="184" cy="119" r="0.9" fill="#ffd0d0" opacity="0.40"/><circle cx="1113" cy="540" r="0.9" fill="#ffd0d0" opacity="0.39"/><circle cx="822" cy="670" r="1.1" fill="#ffc8b8" opacity="0.65"/><circle cx="30" cy="585" r="0.9" fill="#f0f0ff" opacity="0.43"/><circle cx="533" cy="113" r="1.1" fill="#a8e8ff" opacity="0.64"/><circle cx="1146" cy="556" r="0.9" fill="#a8e8ff" opacity="0.42"/><circle cx="594" cy="86" r="0.9" fill="#ffe0c8" opacity="0.37"/><circle cx="778" cy="600" r="0.9" fill="#ffc8b8" opacity="0.45"/><circle cx="417" cy="108" r="0.9" fill="#ffb070" opacity="0.35"/><circle cx="575" cy="667" r="0.9" fill="#ffe0c8" opacity="0.38"/><circle cx="451" cy="107" r="0.9" fill="#ffd0d0" opacity="0.31"/><circle cx="530" cy="672" r="1.4" fill="#ffe0c8" opacity="0.93"/><circle cx="609" cy="651" r="0.9" fill="#c8ffe0" opacity="0.37"/><circle cx="36" cy="640" r="0.9" fill="#f0f0ff" opacity="0.37"/><circle cx="35" cy="459" r="0.9" fill="#c8ffe0" opacity="0.33"/><circle cx="516" cy="654" r="0.9" fill="#ffb070" opacity="0.47"/><circle cx="632" cy="679" r="0.9" fill="#f0f0ff" opacity="0.40"/><circle cx="347" cy="112" r="0.9" fill="#fff0a8" opacity="0.44"/><circle cx="640" cy="681" r="0.9" fill="#f0f0ff" opacity="0.32"/><circle cx="587" cy="85" r="0.9" fill="#ffc8b8" opacity="0.50"/><circle cx="809" cy="549" r="0.9" fill="#ffd0d0" opacity="0.34"/><circle cx="336" cy="63" r="0.9" fill="#ffb070" opacity="0.44"/><circle cx="464" cy="670" r="0.9" fill="#f0f0ff" opacity="0.38"/><circle cx="46" cy="414" r="0.9" fill="#f0f0ff" opacity="0.53"/><circle cx="404" cy="95" r="1.1" fill="#ffc8b8" opacity="0.68"/><circle cx="1030" cy="609" r="1.1" fill="#a8e8ff" opacity="0.67"/><circle cx="1078" cy="599" r="0.9" fill="#a8e8ff" opacity="0.53"/><circle cx="984" cy="648" r="1.1" fill="#c8f0ff" opacity="0.58"/><circle cx="413" cy="653" r="1.4" fill="#fff0a8" opacity="0.98"/><circle cx="24" cy="216" r="1.4" fill="#c8f0ff" opacity="0.95"/><circle cx="428" cy="79" r="0.9" fill="#ffd0d0" opacity="0.35"/><circle cx="186" cy="676" r="0.9" fill="#c8ffe0" opacity="0.41"/><circle cx="1064" cy="676" r="0.9" fill="#fff0a8" opacity="0.53"/><circle cx="313" cy="674" r="0.9" fill="#ffc8b8" opacity="0.40"/><circle cx="3" cy="506" r="0.9" fill="#ffe0c8" opacity="0.54"/><circle cx="747" cy="679" r="1.1" fill="#fff0a8" opacity="0.75"/><circle cx="29" cy="415" r="1.1" fill="#ffe0c8" opacity="0.80"/><circle cx="302" cy="676" r="1.1" fill="#fff0a8" opacity="0.69"/><circle cx="1237" cy="541" r="0.9" fill="#fff0a8" opacity="0.50"/><circle cx="932" cy="658" r="1.1" fill="#fff0a8" opacity="0.63"/><circle cx="340" cy="113" r="1.4" fill="#f0f0ff" opacity="0.86"/><circle cx="1080" cy="663" r="0.9" fill="#c8ffe0" opacity="0.34"/><circle cx="23" cy="258" r="0.9" fill="#f0f0ff" opacity="0.50"/><circle cx="1165" cy="603" r="1.1" fill="#ffd0d0" opacity="0.72"/><circle cx="783" cy="605" r="0.9" fill="#ffe0c8" opacity="0.34"/><circle cx="24" cy="120" r="0.9" fill="#ffb070" opacity="0.50"/><circle cx="930" cy="614" r="0.9" fill="#ffd0d0" opacity="0.40"/><circle cx="13" cy="207" r="1.1" fill="#c8f0ff" opacity="0.66"/><circle cx="1063" cy="599" r="1.1" fill="#ffb070" opacity="0.84"/><circle cx="978" cy="640" r="0.9" fill="#ffb070" opacity="0.52"/><circle cx="660" cy="663" r="0.9" fill="#a8e8ff" opacity="0.44"/><circle cx="34" cy="369" r="1.1" fill="#a8e8ff" opacity="0.57"/><circle cx="1217" cy="660" r="1.1" fill="#ffb070" opacity="0.57"/><circle cx="1231" cy="584" r="1.4" fill="#ffc8b8" opacity="0.89"/><circle cx="357" cy="68" r="0.9" fill="#ffd0d0" opacity="0.40"/><circle cx="122" cy="655" r="0.9" fill="#ffd0d0" opacity="0.52"/><circle cx="1065" cy="572" r="0.9" fill="#c8f0ff" opacity="0.36"/><circle cx="1180" cy="615" r="0.9" fill="#fff0a8" opacity="0.50"/><circle cx="29" cy="592" r="1.1" fill="#a8e8ff" opacity="0.71"/><circle cx="915" cy="678" r="1.4" fill="#ffe0c8" opacity="0.85"/><circle cx="432" cy="73" r="0.9" fill="#f0f0ff" opacity="0.39"/><circle cx="97" cy="687" r="1.1" fill="#a8e8ff" opacity="0.68"/><circle cx="893" cy="568" r="1.4" fill="#fff0a8" opacity="1.00"/><circle cx="31" cy="396" r="0.9" fill="#c8f0ff" opacity="0.50"/><circle cx="851" cy="577" r="0.9" fill="#c8f0ff" opacity="0.36"/><circle cx="1008" cy="601" r="1.1" fill="#c8f0ff" opacity="0.76"/><circle cx="302" cy="125" r="0.9" fill="#ffe0c8" opacity="0.46"/><circle cx="1242" cy="647" r="1.1" fill="#a8e8ff" opacity="0.76"/><circle cx="230" cy="122" r="0.9" fill="#a8e8ff" opacity="0.44"/><circle cx="359" cy="118" r="0.9" fill="#ffd0d0" opacity="0.34"/><circle cx="413" cy="103" r="0.9" fill="#c8f0ff" opacity="0.49"/><circle cx="787" cy="644" r="0.9" fill="#f0f0ff" opacity="0.40"/><circle cx="235" cy="678" r="1.4" fill="#c8f0ff" opacity="0.88"/><circle cx="5" cy="215" r="0.9" fill="#ffd0d0" opacity="0.31"/><circle cx="883" cy="657" r="0.9" fill="#ffb070" opacity="0.54"/><circle cx="21" cy="458" r="0.9" fill="#a8e8ff" opacity="0.34"/><circle cx="44" cy="581" r="0.9" fill="#a8e8ff" opacity="0.38"/><circle cx="84" cy="674" r="1.1" fill="#f0f0ff" opacity="0.71"/><circle cx="1069" cy="555" r="0.9" fill="#ffe0c8" opacity="0.50"/><circle cx="151" cy="66" r="0.9" fill="#ffd0d0" opacity="0.51"/><circle cx="406" cy="59" r="1.4" fill="#ffb070" opacity="0.95"/><circle cx="10" cy="169" r="0.9" fill="#c8f0ff" opacity="0.38"/><circle cx="426" cy="681" r="0.9" fill="#ffb070" opacity="0.47"/><circle cx="9" cy="186" r="1.4" fill="#ffc8b8" opacity="0.96"/><circle cx="877" cy="617" r="0.9" fill="#fff0a8" opacity="0.48"/><circle cx="154" cy="89" r="1.1" fill="#f0f0ff" opacity="0.61"/><circle cx="901" cy="578" r="0.9" fill="#ffc8b8" opacity="0.46"/><circle cx="1246" cy="341" r="1.4" fill="#a8e8ff" opacity="0.86"/><circle cx="1224" cy="557" r="0.9" fill="#ffe0c8" opacity="0.55"/><circle cx="856" cy="597" r="0.9" fill="#c8ffe0" opacity="0.39"/><circle cx="404" cy="70" r="1.1" fill="#a8e8ff" opacity="0.75"/><circle cx="169" cy="652" r="0.9" fill="#ffe0c8" opacity="0.30"/><circle cx="1210" cy="646" r="1.4" fill="#c8ffe0" opacity="0.99"/><circle cx="476" cy="121" r="1.1" fill="#c8f0ff" opacity="0.60"/><circle cx="699" cy="686" r="0.9" fill="#c8f0ff" opacity="0.49"/><circle cx="796" cy="662" r="1.4" fill="#ffc8b8" opacity="0.88"/><circle cx="1235" cy="687" r="1.1" fill="#c8ffe0" opacity="0.76"/><circle cx="548" cy="669" r="0.9" fill="#c8ffe0" opacity="0.43"/><circle cx="23" cy="410" r="1.4" fill="#c8ffe0" opacity="0.87"/><circle cx="1206" cy="628" r="0.9" fill="#fff0a8" opacity="0.40"/><circle cx="718" cy="665" r="0.9" fill="#ffc8b8" opacity="0.38"/><circle cx="45" cy="661" r="0.9" fill="#ffe0c8" opacity="0.53"/><circle cx="1081" cy="682" r="0.9" fill="#c8ffe0" opacity="0.50"/><circle cx="1074" cy="659" r="0.9" fill="#f0f0ff" opacity="0.36"/><circle cx="794" cy="633" r="0.9" fill="#ffd0d0" opacity="0.53"/><circle cx="12" cy="190" r="1.1" fill="#fff0a8" opacity="0.64"/><circle cx="1040" cy="650" r="1.1" fill="#a8e8ff" opacity="0.57"/><circle cx="632" cy="668" r="1.1" fill="#a8e8ff" opacity="0.60"/><circle cx="191" cy="659" r="0.9" fill="#a8e8ff" opacity="0.32"/><circle cx="60" cy="112" r="0.9" fill="#ffb070" opacity="0.54"/><circle cx="870" cy="575" r="0.9" fill="#ffd0d0" opacity="0.32"/><circle cx="132" cy="91" r="0.9" fill="#ffd0d0" opacity="0.54"/><circle cx="1209" cy="603" r="0.9" fill="#a8e8ff" opacity="0.54"/><circle cx="6" cy="142" r="1.1" fill="#f0f0ff" opacity="0.84"/><circle cx="1225" cy="580" r="0.9" fill="#ffc8b8" opacity="0.45"/><circle cx="445" cy="665" r="0.9" fill="#ffc8b8" opacity="0.32"/><circle cx="563" cy="94" r="0.9" fill="#a8e8ff" opacity="0.44"/><circle cx="748" cy="575" r="0.9" fill="#ffe0c8" opacity="0.37"/><circle cx="1044" cy="626" r="1.4" fill="#ffc8b8" opacity="0.90"/><circle cx="33" cy="615" r="0.9" fill="#a8e8ff" opacity="0.37"/><circle cx="287" cy="114" r="0.9" fill="#ffe0c8" opacity="0.33"/><circle cx="22" cy="280" r="0.9" fill="#f0f0ff" opacity="0.53"/><circle cx="609" cy="59" r="0.9" fill="#ffc8b8" opacity="0.32"/><circle cx="24" cy="403" r="0.9" fill="#ffc8b8" opacity="0.49"/><circle cx="109" cy="77" r="1.1" fill="#ffe0c8" opacity="0.75"/><circle cx="882" cy="641" r="1.1" fill="#ffe0c8" opacity="0.63"/><circle cx="148" cy="648" r="1.1" fill="#a8e8ff" opacity="0.81"/><circle cx="807" cy="628" r="1.1" fill="#ffe0c8" opacity="0.79"/><circle cx="449" cy="681" r="0.9" fill="#c8f0ff" opacity="0.50"/><circle cx="597" cy="95" r="1.1" fill="#c8ffe0" opacity="0.58"/><circle cx="1245" cy="260" r="1.4" fill="#ffb070" opacity="0.92"/><circle cx="439" cy="83" r="1.4" fill="#ffe0c8" opacity="0.95"/><circle cx="945" cy="587" r="0.9" fill="#ffb070" opacity="0.39"/><circle cx="561" cy="91" r="0.9" fill="#c8f0ff" opacity="0.43"/><circle cx="426" cy="649" r="1.1" fill="#fff0a8" opacity="0.63"/><circle cx="448" cy="105" r="0.9" fill="#a8e8ff" opacity="0.49"/><circle cx="1055" cy="597" r="0.9" fill="#ffc8b8" opacity="0.40"/><circle cx="11" cy="549" r="0.9" fill="#ffe0c8" opacity="0.42"/><circle cx="624" cy="686" r="0.9" fill="#ffc8b8" opacity="0.32"/><circle cx="1209" cy="578" r="1.1" fill="#fff0a8" opacity="0.77"/><circle cx="1072" cy="550" r="0.9" fill="#ffd0d0" opacity="0.31"/><circle cx="96" cy="656" r="0.9" fill="#ffb070" opacity="0.39"/><circle cx="1248" cy="188" r="0.9" fill="#ffe0c8" opacity="0.50"/><circle cx="539" cy="95" r="1.4" fill="#c8f0ff" opacity="0.98"/><circle cx="879" cy="674" r="0.9" fill="#c8ffe0" opacity="0.43"/><circle cx="1000" cy="596" r="0.9" fill="#ffd0d0" opacity="0.35"/><circle cx="49" cy="484" r="0.9" fill="#c8ffe0" opacity="0.53"/><circle cx="769" cy="672" r="0.9" fill="#c8ffe0" opacity="0.33"/><circle cx="550" cy="116" r="0.9" fill="#fff0a8" opacity="0.33"/><circle cx="388" cy="684" r="1.4" fill="#f0f0ff" opacity="0.88"/><circle cx="636" cy="660" r="1.4" fill="#a8e8ff" opacity="0.99"/><circle cx="162" cy="673" r="1.1" fill="#c8ffe0" opacity="0.74"/><circle cx="406" cy="108" r="0.9" fill="#ffd0d0" opacity="0.49"/><circle cx="399" cy="676" r="1.1" fill="#f0f0ff" opacity="0.68"/><circle cx="250" cy="79" r="1.1" fill="#c8f0ff" opacity="0.85"/><circle cx="986" cy="606" r="1.4" fill="#ffc8b8" opacity="0.98"/><circle cx="507" cy="105" r="0.9" fill="#ffc8b8" opacity="0.31"/><circle cx="601" cy="110" r="0.9" fill="#c8ffe0" opacity="0.42"/><circle cx="270" cy="674" r="0.9" fill="#ffe0c8" opacity="0.43"/><circle cx="159" cy="81" r="0.9" fill="#ffe0c8" opacity="0.33"/><circle cx="690" cy="656" r="0.9" fill="#ffd0d0" opacity="0.40"/><circle cx="888" cy="549" r="0.9" fill="#ffe0c8" opacity="0.44"/><circle cx="441" cy="120" r="0.9" fill="#ffd0d0" opacity="0.49"/><circle cx="762" cy="675" r="0.9" fill="#ffb070" opacity="0.38"/><circle cx="681" cy="662" r="0.9" fill="#ffe0c8" opacity="0.32"/><circle cx="831" cy="636" r="0.9" fill="#c8ffe0" opacity="0.35"/><circle cx="1246" cy="410" r="1.1" fill="#ffe0c8" opacity="0.58"/><circle cx="769" cy="631" r="0.9" fill="#c8f0ff" opacity="0.40"/><circle cx="47" cy="675" r="1.1" fill="#ffd0d0" opacity="0.72"/><circle cx="929" cy="540" r="0.9" fill="#ffb070" opacity="0.37"/><circle cx="792" cy="633" r="0.9" fill="#c8f0ff" opacity="0.35"/><circle cx="44" cy="538" r="0.9" fill="#c8ffe0" opacity="0.30"/><circle cx="615" cy="666" r="1.1" fill="#c8f0ff" opacity="0.70"/><circle cx="30" cy="101" r="0.9" fill="#fff0a8" opacity="0.32"/><circle cx="11" cy="646" r="0.9" fill="#ffe0c8" opacity="0.48"/><circle cx="26" cy="565" r="0.9" fill="#f0f0ff" opacity="0.50"/><circle cx="1126" cy="564" r="1.4" fill="#fff0a8" opacity="0.94"/><circle cx="9" cy="338" r="1.4" fill="#ffc8b8" opacity="0.90"/><circle cx="13" cy="113" r="1.1" fill="#ffb070" opacity="0.58"/><circle cx="593" cy="67" r="0.9" fill="#a8e8ff" opacity="0.47"/><circle cx="1247" cy="472" r="1.1" fill="#ffe0c8" opacity="0.60"/><circle cx="981" cy="547" r="0.9" fill="#ffe0c8" opacity="0.33"/><circle cx="35" cy="210" r="1.1" fill="#f0f0ff" opacity="0.82"/><circle cx="1078" cy="674" r="1.4" fill="#c8ffe0" opacity="0.92"/><circle cx="952" cy="576" r="0.9" fill="#ffe0c8" opacity="0.33"/><circle cx="872" cy="607" r="1.1" fill="#f0f0ff" opacity="0.73"/><circle cx="829" cy="574" r="0.9" fill="#ffd0d0" opacity="0.43"/><circle cx="859" cy="613" r="0.9" fill="#f0f0ff" opacity="0.47"/><circle cx="1245" cy="520" r="0.9" fill="#ffd0d0" opacity="0.53"/><circle cx="1095" cy="564" r="0.9" fill="#c8f0ff" opacity="0.42"/><circle cx="397" cy="63" r="0.9" fill="#ffc8b8" opacity="0.49"/><circle cx="183" cy="667" r="0.9" fill="#ffd0d0" opacity="0.36"/><circle cx="982" cy="679" r="0.9" fill="#ffc8b8" opacity="0.36"/><circle cx="49" cy="405" r="0.9" fill="#ffc8b8" opacity="0.51"/><circle cx="48" cy="682" r="0.9" fill="#c8f0ff" opacity="0.54"/><circle cx="420" cy="85" r="0.9" fill="#c8f0ff" opacity="0.43"/><circle cx="48" cy="352" r="0.9" fill="#ffd0d0" opacity="0.48"/><circle cx="1046" cy="623" r="0.9" fill="#ffd0d0" opacity="0.33"/><circle cx="521" cy="676" r="1.1" fill="#a8e8ff" opacity="0.78"/><circle cx="932" cy="616" r="0.9" fill="#ffd0d0" opacity="0.33"/><circle cx="210" cy="663" r="0.9" fill="#ffe0c8" opacity="0.39"/><circle cx="167" cy="686" r="0.9" fill="#c8f0ff" opacity="0.35"/><circle cx="834" cy="604" r="0.9" fill="#ffd0d0" opacity="0.45"/><circle cx="241" cy="84" r="0.9" fill="#fff0a8" opacity="0.50"/><circle cx="314" cy="74" r="0.9" fill="#ffb070" opacity="0.37"/><circle cx="164" cy="124" r="1.1" fill="#c8ffe0" opacity="0.79"/><circle cx="26" cy="610" r="0.9" fill="#fff0a8" opacity="0.54"/><circle cx="767" cy="587" r="1.4" fill="#a8e8ff" opacity="0.98"/><circle cx="36" cy="177" r="0.9" fill="#fff0a8" opacity="0.49"/><circle cx="186" cy="110" r="0.9" fill="#ffd0d0" opacity="0.47"/><circle cx="1023" cy="663" r="0.9" fill="#a8e8ff" opacity="0.54"/><circle cx="976" cy="642" r="0.9" fill="#ffd0d0" opacity="0.52"/><circle cx="1226" cy="684" r="0.9" fill="#ffd0d0" opacity="0.54"/><circle cx="795" cy="641" r="0.9" fill="#ffe0c8" opacity="0.42"/><circle cx="526" cy="65" r="0.9" fill="#ffd0d0" opacity="0.42"/><circle cx="451" cy="673" r="1.1" fill="#ffb070" opacity="0.62"/><circle cx="16" cy="368" r="0.9" fill="#ffb070" opacity="0.44"/><circle cx="768" cy="647" r="0.9" fill="#c8ffe0" opacity="0.42"/><circle cx="1244" cy="145" r="0.9" fill="#fff0a8" opacity="0.38"/><circle cx="841" cy="617" r="1.4" fill="#f0f0ff" opacity="0.96"/><circle cx="901" cy="659" r="1.1" fill="#f0f0ff" opacity="0.84"/><circle cx="834" cy="656" r="0.9" fill="#a8e8ff" opacity="0.33"/><circle cx="30" cy="96" r="0.9" fill="#ffc8b8" opacity="0.44"/><circle cx="743" cy="672" r="1.1" fill="#fff0a8" opacity="0.65"/><circle cx="12" cy="129" r="0.9" fill="#fff0a8" opacity="0.52"/><circle cx="10" cy="490" r="1.1" fill="#fff0a8" opacity="0.69"/><circle cx="162" cy="674" r="0.9" fill="#ffd0d0" opacity="0.34"/><circle cx="176" cy="653" r="0.9" fill="#c8ffe0" opacity="0.43"/><circle cx="4" cy="81" r="1.4" fill="#ffe0c8" opacity="0.91"/><circle cx="41" cy="600" r="0.9" fill="#fff0a8" opacity="0.40"/><circle cx="851" cy="627" r="0.9" fill="#ffd0d0" opacity="0.46"/><circle cx="795" cy="573" r="0.9" fill="#ffc8b8" opacity="0.45"/><circle cx="573" cy="76" r="0.9" fill="#fff0a8" opacity="0.54"/><circle cx="592" cy="102" r="0.9" fill="#c8f0ff" opacity="0.55"/><circle cx="33" cy="129" r="0.9" fill="#c8f0ff" opacity="0.34"/><circle cx="189" cy="71" r="0.9" fill="#c8f0ff" opacity="0.34"/><circle cx="1246" cy="84" r="1.1" fill="#c8ffe0" opacity="0.56"/><circle cx="920" cy="559" r="0.9" fill="#f0f0ff" opacity="0.37"/><circle cx="898" cy="586" r="0.9" fill="#fff0a8" opacity="0.48"/><circle cx="1032" cy="637" r="1.4" fill="#ffd0d0" opacity="0.99"/><circle cx="194" cy="81" r="0.9" fill="#c8ffe0" opacity="0.30"/><circle cx="1173" cy="548" r="0.9" fill="#fff0a8" opacity="0.51"/><circle cx="577" cy="672" r="1.1" fill="#a8e8ff" opacity="0.68"/><circle cx="898" cy="605" r="0.9" fill="#f0f0ff" opacity="0.40"/><circle cx="803" cy="686" r="0.9" fill="#f0f0ff" opacity="0.38"/><circle cx="27" cy="106" r="0.9" fill="#ffb070" opacity="0.42"/><circle cx="228" cy="108" r="1.1" fill="#ffd0d0" opacity="0.74"/><circle cx="5" cy="283" r="0.9" fill="#c8f0ff" opacity="0.31"/><circle cx="751" cy="680" r="1.4" fill="#ffc8b8" opacity="0.96"/><circle cx="469" cy="78" r="1.1" fill="#ffd0d0" opacity="0.76"/><circle cx="199" cy="685" r="1.1" fill="#c8f0ff" opacity="0.69"/><circle cx="565" cy="98" r="0.9" fill="#fff0a8" opacity="0.39"/><circle cx="511" cy="93" r="0.9" fill="#fff0a8" opacity="0.52"/><circle cx="1244" cy="605" r="0.9" fill="#ffd0d0" opacity="0.46"/><circle cx="1171" cy="597" r="1.1" fill="#c8ffe0" opacity="0.82"/><circle cx="1181" cy="618" r="0.9" fill="#fff0a8" opacity="0.41"/><circle cx="1157" cy="569" r="0.9" fill="#ffc8b8" opacity="0.46"/><circle cx="1129" cy="554" r="0.9" fill="#ffc8b8" opacity="0.33"/><circle cx="1169" cy="565" r="1.1" fill="#ffc8b8" opacity="0.70"/><circle cx="1181" cy="677" r="1.4" fill="#c8ffe0" opacity="0.91"/><circle cx="1165" cy="567" r="0.9" fill="#a8e8ff" opacity="0.32"/><circle cx="1155" cy="567" r="1.1" fill="#c8ffe0" opacity="0.71"/><circle cx="1184" cy="565" r="1.1" fill="#ffb070" opacity="0.79"/><circle cx="1205" cy="649" r="0.9" fill="#c8ffe0" opacity="0.37"/><circle cx="1208" cy="683" r="1.4" fill="#ffc8b8" opacity="0.92"/><circle cx="1150" cy="549" r="0.9" fill="#ffe0c8" opacity="0.33"/><circle cx="1167" cy="657" r="0.9" fill="#ffe0c8" opacity="0.52"/><circle cx="1144" cy="618" r="0.9" fill="#a8e8ff" opacity="0.52"/><circle cx="1237" cy="552" r="1.1" fill="#a8e8ff" opacity="0.70"/><circle cx="1178" cy="625" r="0.9" fill="#ffc8b8" opacity="0.41"/><circle cx="1180" cy="649" r="1.1" fill="#f0f0ff" opacity="0.57"/><circle cx="1236" cy="641" r="0.9" fill="#f0f0ff" opacity="0.33"/><circle cx="1226" cy="684" r="0.9" fill="#fff0a8" opacity="0.42"/><circle cx="1134" cy="551" r="0.9" fill="#c8f0ff" opacity="0.51"/><circle cx="1241" cy="688" r="1.1" fill="#ffe0c8" opacity="0.77"/><circle cx="1229" cy="586" r="0.9" fill="#ffe0c8" opacity="0.34"/><circle cx="1223" cy="639" r="1.4" fill="#c8f0ff" opacity="0.94"/><circle cx="1180" cy="555" r="0.9" fill="#ffb070" opacity="0.31"/><circle cx="1170" cy="557" r="0.9" fill="#ffe0c8" opacity="0.31"/><circle cx="1237" cy="584" r="0.9" fill="#ffc8b8" opacity="0.47"/><circle cx="1161" cy="553" r="0.9" fill="#c8ffe0" opacity="0.49"/><circle cx="1172" cy="627" r="1.1" fill="#c8ffe0" opacity="0.57"/><circle cx="1216" cy="627" r="0.9" fill="#ffb070" opacity="0.33"/><circle cx="1144" cy="580" r="0.9" fill="#ffb070" opacity="0.44"/><circle cx="1234" cy="665" r="0.9" fill="#c8f0ff" opacity="0.35"/><circle cx="1178" cy="553" r="1.1" fill="#ffb070" opacity="0.61"/><circle cx="1213" cy="667" r="0.9" fill="#ffb070" opacity="0.53"/><circle cx="1180" cy="589" r="1.1" fill="#f0f0ff" opacity="0.56"/><circle cx="1197" cy="641" r="1.1" fill="#c8f0ff" opacity="0.74"/><circle cx="1221" cy="556" r="1.4" fill="#ffe0c8" opacity="0.90"/><circle cx="1227" cy="551" r="1.1" fill="#c8ffe0" opacity="0.67"/><circle cx="1186" cy="606" r="0.9" fill="#a8e8ff" opacity="0.44"/><circle cx="1240" cy="670" r="1.1" fill="#ffd0d0" opacity="0.81"/><circle cx="1236" cy="542" r="0.9" fill="#c8f0ff" opacity="0.46"/><circle cx="1148" cy="596" r="1.1" fill="#ffe0c8" opacity="0.68"/><circle cx="1177" cy="686" r="1.4" fill="#ffe0c8" opacity="0.93"/><circle cx="1211" cy="648" r="1.1" fill="#fff0a8" opacity="0.61"/><circle cx="1210" cy="641" r="0.9" fill="#c8ffe0" opacity="0.42"/><circle cx="1221" cy="679" r="1.1" fill="#ffe0c8" opacity="0.70"/><circle cx="1158" cy="557" r="0.9" fill="#a8e8ff" opacity="0.54"/><circle cx="1179" cy="619" r="0.9" fill="#f0f0ff" opacity="0.35"/><circle cx="1238" cy="553" r="1.1" fill="#ffc8b8" opacity="0.61"/><circle cx="1191" cy="620" r="1.1" fill="#c8f0ff" opacity="0.74"/><circle cx="1156" cy="668" r="1.1" fill="#fff0a8" opacity="0.67"/><circle cx="1227" cy="626" r="0.9" fill="#ffb070" opacity="0.55"/><circle cx="1237" cy="631" r="1.1" fill="#c8ffe0" opacity="0.67"/><circle cx="1170" cy="601" r="1.1" fill="#ffb070" opacity="0.78"/><circle cx="1175" cy="651" r="0.9" fill="#fff0a8" opacity="0.55"/><circle cx="1182" cy="544" r="0.9" fill="#a8e8ff" opacity="0.33"/><circle cx="1233" cy="545" r="0.9" fill="#c8ffe0" opacity="0.40"/><circle cx="1180" cy="627" r="0.9" fill="#fff0a8" opacity="0.32"/><circle cx="1159" cy="588" r="0.9" fill="#ffe0c8" opacity="0.35"/><circle cx="1166" cy="675" r="0.9" fill="#fff0a8" opacity="0.54"/><circle cx="1236" cy="644" r="0.9" fill="#a8e8ff" opacity="0.33"/><circle cx="1236" cy="686" r="1.1" fill="#ffb070" opacity="0.65"/><circle cx="1211" cy="645" r="0.9" fill="#c8f0ff" opacity="0.49"/><circle cx="1234" cy="640" r="0.9" fill="#f0f0ff" opacity="0.36"/><circle cx="1201" cy="659" r="0.9" fill="#fff0a8" opacity="0.47"/><circle cx="1226" cy="550" r="1.1" fill="#fff0a8" opacity="0.63"/><circle cx="1145" cy="577" r="1.4" fill="#c8f0ff" opacity="0.98"/><circle cx="1139" cy="544" r="0.9" fill="#a8e8ff" opacity="0.40"/><circle cx="1217" cy="619" r="1.1" fill="#ffe0c8" opacity="0.69"/><circle cx="1239" cy="654" r="0.9" fill="#fff0a8" opacity="0.33"/><circle cx="1186" cy="594" r="1.1" fill="#ffe0c8" opacity="0.84"/><circle cx="1243" cy="597" r="1.4" fill="#ffb070" opacity="0.89"/><circle cx="1145" cy="616" r="1.1" fill="#ffe0c8" opacity="0.63"/><circle cx="1186" cy="553" r="0.9" fill="#ffb070" opacity="0.45"/><circle cx="1242" cy="604" r="0.9" fill="#ffe0c8" opacity="0.54"/><circle cx="1147" cy="583" r="0.9" fill="#ffe0c8" opacity="0.40"/><circle cx="1129" cy="539" r="0.9" fill="#f0f0ff" opacity="0.34"/><circle cx="1183" cy="569" r="1.1" fill="#c8ffe0" opacity="0.69"/><circle cx="1162" cy="645" r="1.1" fill="#c8ffe0" opacity="0.77"/><circle cx="1172" cy="545" r="0.9" fill="#f0f0ff" opacity="0.36"/><circle cx="1154" cy="621" r="0.9" fill="#c8f0ff" opacity="0.48"/><circle cx="1131" cy="659" r="1.4" fill="#ffc8b8" opacity="0.91"/><circle cx="1191" cy="670" r="0.9" fill="#f0f0ff" opacity="0.38"/><circle cx="1196" cy="590" r="0.9" fill="#ffc8b8" opacity="0.53"/><circle cx="1201" cy="674" r="0.9" fill="#a8e8ff" opacity="0.33"/><circle cx="1193" cy="587" r="1.1" fill="#c8ffe0" opacity="0.70"/><circle cx="1159" cy="616" r="0.9" fill="#a8e8ff" opacity="0.53"/><circle cx="1158" cy="547" r="1.1" fill="#c8ffe0" opacity="0.75"/><circle cx="1162" cy="604" r="1.1" fill="#ffc8b8" opacity="0.56"/><circle cx="1157" cy="584" r="1.4" fill="#ffd0d0" opacity="0.93"/><circle cx="1181" cy="583" r="0.9" fill="#a8e8ff" opacity="0.31"/><circle cx="1228" cy="560" r="0.9" fill="#c8ffe0" opacity="0.43"/><circle cx="1209" cy="665" r="0.9" fill="#a8e8ff" opacity="0.47"/><circle cx="1191" cy="549" r="1.4" fill="#ffe0c8" opacity="0.99"/><circle cx="1209" cy="673" r="0.9" fill="#ffe0c8" opacity="0.44"/><circle cx="1191" cy="576" r="0.9" fill="#a8e8ff" opacity="0.39"/><circle cx="1207" cy="552" r="0.9" fill="#ffc8b8" opacity="0.39"/><circle cx="1220" cy="603" r="0.9" fill="#ffe0c8" opacity="0.31"/><circle cx="1194" cy="641" r="0.9" fill="#ffb070" opacity="0.47"/><circle cx="1145" cy="543" r="0.9" fill="#ffd0d0" opacity="0.40"/><circle cx="1151" cy="572" r="1.1" fill="#a8e8ff" opacity="0.65"/><circle cx="1166" cy="592" r="1.1" fill="#fff0a8" opacity="0.75"/><circle cx="1196" cy="602" r="0.9" fill="#fff0a8" opacity="0.43"/><circle cx="1126" cy="550" r="1.1" fill="#ffc8b8" opacity="0.80"/><circle cx="1182" cy="630" r="0.9" fill="#f0f0ff" opacity="0.38"/><circle cx="1212" cy="617" r="0.9" fill="#ffd0d0" opacity="0.49"/><circle cx="1199" cy="664" r="1.1" fill="#ffb070" opacity="0.65"/><circle cx="1199" cy="627" r="0.9" fill="#fff0a8" opacity="0.52"/><circle cx="1222" cy="627" r="0.9" fill="#c8f0ff" opacity="0.31"/><circle cx="1156" cy="575" r="1.1" fill="#fff0a8" opacity="0.64"/><circle cx="1198" cy="598" r="0.9" fill="#c8f0ff" opacity="0.30"/><circle cx="1223" cy="608" r="0.9" fill="#f0f0ff" opacity="0.53"/><circle cx="1205" cy="609" r="1.1" fill="#a8e8ff" opacity="0.65"/><circle cx="1167" cy="624" r="0.9" fill="#c8ffe0" opacity="0.46"/><circle cx="1246" cy="551" r="0.9" fill="#ffe0c8" opacity="0.41"/><circle cx="1131" cy="663" r="1.1" fill="#c8ffe0" opacity="0.63"/><circle cx="1209" cy="660" r="1.1" fill="#f0f0ff" opacity="0.75"/><circle cx="1238" cy="615" r="0.9" fill="#ffe0c8" opacity="0.43"/><circle cx="1149" cy="612" r="0.9" fill="#c8f0ff" opacity="0.53"/><circle cx="1158" cy="607" r="1.1" fill="#a8e8ff" opacity="0.75"/><circle cx="1177" cy="587" r="0.9" fill="#c8f0ff" opacity="0.34"/><circle cx="1187" cy="616" r="1.1" fill="#ffe0c8" opacity="0.70"/><circle cx="1244" cy="667" r="0.9" fill="#c8f0ff" opacity="0.48"/><circle cx="1202" cy="599" r="1.4" fill="#a8e8ff" opacity="0.87"/><circle cx="1207" cy="592" r="1.1" fill="#ffc8b8" opacity="0.59"/><circle cx="1208" cy="641" r="0.9" fill="#f0f0ff" opacity="0.33"/><circle cx="1192" cy="558" r="0.9" fill="#ffb070" opacity="0.53"/><circle cx="1220" cy="636" r="1.1" fill="#ffd0d0" opacity="0.62"/><circle cx="1181" cy="605" r="1.1" fill="#ffd0d0" opacity="0.58"/><circle cx="1148" cy="683" r="0.9" fill="#c8ffe0" opacity="0.55"/><circle cx="1162" cy="560" r="0.9" fill="#a8e8ff" opacity="0.50"/><circle cx="1239" cy="580" r="0.9" fill="#ffc8b8" opacity="0.35"/><circle cx="1159" cy="632" r="0.9" fill="#c8ffe0" opacity="0.43"/><circle cx="1150" cy="684" r="0.9" fill="#fff0a8" opacity="0.53"/><circle cx="1162" cy="649" r="0.9" fill="#ffd0d0" opacity="0.55"/><circle cx="1199" cy="576" r="0.9" fill="#ffe0c8" opacity="0.53"/><circle cx="1158" cy="589" r="1.4" fill="#ffd0d0" opacity="0.92"/><circle cx="1242" cy="686" r="1.1" fill="#c8ffe0" opacity="0.62"/><circle cx="1219" cy="600" r="0.9" fill="#c8f0ff" opacity="0.37"/><circle cx="1164" cy="685" r="0.9" fill="#ffd0d0" opacity="0.31"/><circle cx="1210" cy="557" r="0.9" fill="#fff0a8" opacity="0.51"/><circle cx="1180" cy="647" r="0.9" fill="#ffb070" opacity="0.35"/><circle cx="1143" cy="604" r="1.1" fill="#a8e8ff" opacity="0.78"/><circle cx="1175" cy="610" r="1.1" fill="#ffe0c8" opacity="0.72"/><circle cx="1182" cy="618" r="1.1" fill="#a8e8ff" opacity="0.70"/><circle cx="1243" cy="667" r="0.9" fill="#fff0a8" opacity="0.43"/><circle cx="1151" cy="570" r="1.1" fill="#ffd0d0" opacity="0.85"/><circle cx="1210" cy="615" r="1.1" fill="#a8e8ff" opacity="0.83"/><circle cx="1241" cy="662" r="1.1" fill="#ffd0d0" opacity="0.58"/><circle cx="1182" cy="677" r="0.9" fill="#ffc8b8" opacity="0.36"/><circle cx="1204" cy="580" r="0.9" fill="#f0f0ff" opacity="0.31"/><circle cx="1142" cy="661" r="0.9" fill="#ffd0d0" opacity="0.34"/><circle cx="1192" cy="598" r="1.1" fill="#fff0a8" opacity="0.76"/><circle cx="1213" cy="573" r="0.9" fill="#ffd0d0" opacity="0.44"/><circle cx="1236" cy="638" r="0.9" fill="#ffc8b8" opacity="0.45"/><circle cx="1153" cy="642" r="1.1" fill="#ffc8b8" opacity="0.76"/><circle cx="1216" cy="586" r="0.9" fill="#ffc8b8" opacity="0.55"/><circle cx="1148" cy="566" r="0.9" fill="#a8e8ff" opacity="0.41"/><circle cx="1139" cy="541" r="1.1" fill="#ffb070" opacity="0.73"/><circle cx="1157" cy="644" r="0.9" fill="#a8e8ff" opacity="0.42"/><circle cx="1145" cy="652" r="1.4" fill="#ffb070" opacity="0.91"/><circle cx="1178" cy="558" r="0.9" fill="#c8ffe0" opacity="0.50"/><circle cx="1235" cy="572" r="0.9" fill="#c8f0ff" opacity="0.40"/><circle cx="1209" cy="617" r="0.9" fill="#f0f0ff" opacity="0.35"/><circle cx="1188" cy="600" r="0.9" fill="#c8f0ff" opacity="0.35"/><circle cx="1217" cy="652" r="0.9" fill="#a8e8ff" opacity="0.31"/><circle cx="1186" cy="585" r="0.9" fill="#f0f0ff" opacity="0.44"/><circle cx="1151" cy="577" r="0.9" fill="#ffb070" opacity="0.41"/><circle cx="1214" cy="542" r="1.4" fill="#ffd0d0" opacity="0.97"/><circle cx="1160" cy="603" r="0.9" fill="#c8ffe0" opacity="0.46"/><circle cx="1199" cy="668" r="0.9" fill="#c8ffe0" opacity="0.37"/><path d="M48,480 L0,563" stroke="#7a7a7a" stroke-width="0.9" fill="none" opacity="0.85"/><path d="M0,624 L7,676" stroke="#7a7a7a" stroke-width="0.9" fill="none" opacity="0.85"/><path d="M812,537 L840,688" stroke="#7a7a7a" stroke-width="0.9" fill="none" opacity="0.85"/><path d="M1007,537 L1003,552 L922,688" stroke="#7a7a7a" stroke-width="0.9" fill="none" opacity="0.85"/><path d="M164,66 L250,124" stroke="#1a4536" stroke-width="1" stroke-dasharray="2,2" fill="none"/><path d="M298,125 L332,58" stroke="#1a4536" stroke-width="1" stroke-dasharray="2,2" fill="none"/><path d="M0,523 L51,551" stroke="#1a4536" stroke-width="1" stroke-dasharray="2,2" fill="none"/><path d="M82,646 L72,676" stroke="#1a4536" stroke-width="1" stroke-dasharray="2,2" fill="none"/><path d="M300,647 C380,665 450,682 520,690 M730,688 C800,676 880,660 944,648 C1020,628 1080,606 1124,586 C1170,566 1210,552 1248,537" stroke="#1a4536" stroke-width="1" stroke-dasharray="2,2" fill="none"/><path d="M617,646 L617,688" stroke="#1a4536" stroke-width="1" stroke-dasharray="2,2" fill="none"/><path d="M1106,537 L1135,600 L1163,688" stroke="#173d2e" stroke-width="0.9" stroke-dasharray="2,2" fill="none"/><circle cx="256" cy="120" r="1.8" fill="#fff"/></svg>
<div class="t" style="left:261px;top:117.5px;color:#7b93a3;font-size:8px;letter-spacing:-0.3px;">Eltanin</div>
<div class="t" style="left:4px;top:61.0px;color:#e6e6e6;font-size:8px;letter-spacing:-0.3px;">LT: 10:56:43 AM AST</div>
<div class="t" style="left:76px;top:61.0px;color:#e6e6e6;font-size:8px;letter-spacing:-0.45px;">Thursday, January 29, 2015</div>
<div class="t" style="left:4px;top:677.0px;color:#e6e6e6;font-size:8px;letter-spacing:-0.55px;">Sabahiya, Ahmadi, Kuwait</div>
<svg class="a" style="left:1133px;top:537px;" width="12" height="12" viewBox="0 0 12 12"><circle cx="6" cy="5.7" r="2.8" fill="none" stroke="#20c020" stroke-width="1" stroke-dasharray="1.5,1"/></svg>
<svg class="a" style="left:1190px;top:610px;" width="14" height="14" viewBox="0 0 14 14"><circle cx="7" cy="7" r="4" fill="none" stroke="#20a0b0" stroke-width="1" stroke-dasharray="1.5,1"/></svg>
<div style="left:0px;top:0px;width:1248px;height:58px;background:#eff0f1;"></div>
<svg class="a" style="left:1px;top:0px;" width="12" height="13" viewBox="0 0 12 13"><g transform="scale(1.0)"><ellipse cx="3" cy="3" rx="2.6" ry="2.2" fill="#bbb" stroke="#222" stroke-width="0.8"/><path d="M3,2 L10,7 L8.5,9 L1.8,4.2 Z" fill="#222"/><path d="M6,8 L4.5,12 M6,8 L7.5,12" stroke="#222" stroke-width="0.9"/></g></svg>
<div class="t" style="left:473px;top:0.0px;width:300px;text-align:center;color:#b4b7b9;font-size:8px;">KStars</div>
<svg class="a" style="left:1211px;top:1px;" width="40" height="10" viewBox="0 0 40 10"><path d="M2.5,3.5 L5.5,6.5 L8.5,3.5" fill="none" stroke="#b0b3b5" stroke-width="1.1"/><path d="M19.5,2 L22.5,5 L19.5,8 L16.5,5 Z" fill="none" stroke="#b0b3b5" stroke-width="1.1"/><circle cx="32.5" cy="5" r="4.6" fill="#b8bbbd"/><path d="M30.5,3 L34.5,7 M34.5,3 L30.5,7" stroke="#eff0f1" stroke-width="1.2"/></svg>
<div class="t" style="left:6.5px;top:17.0px;color:#31363b;font-size:8px;">File</div>
<div class="t" style="left:30.8px;top:17.0px;color:#31363b;font-size:8px;">Time</div>
<div class="t" style="left:59.6px;top:17.0px;color:#31363b;font-size:8px;">Pointing</div>
<div class="t" style="left:100px;top:17.0px;color:#31363b;font-size:8px;">View</div>
<div class="t" style="left:129px;top:17.0px;color:#31363b;font-size:8px;">Tools</div>
<div class="t" style="left:160px;top:17.0px;color:#31363b;font-size:8px;">Data</div>
<div class="t" style="left:188.5px;top:17.0px;color:#31363b;font-size:8px;">Observation</div>
<div class="t" style="left:240.4px;top:17.0px;color:#31363b;font-size:8px;">Settings</div>
<div class="t" style="left:279.6px;top:17.0px;color:#31363b;font-size:8px;">Help</div>
<svg class="a" style="left:5px;top:37px;" width="16" height="16" viewBox="0 0 16 16"><circle cx="6.5" cy="6.5" r="4.8" fill="#d7e9f7" stroke="#6e8fb3" stroke-width="1.1"/><path d="M10,10 L14.5,14.5" stroke="#9a9da0" stroke-width="2"/><path d="M4,6.5 H9 M6.5,4 V9" stroke="#3d6ea5" stroke-width="1"/></svg>
<svg class="a" style="left:27px;top:37px;" width="16" height="16" viewBox="0 0 16 16"><circle cx="6.5" cy="6.5" r="4.8" fill="#d7e9f7" stroke="#6e8fb3" stroke-width="1.1"/><path d="M10,10 L14.5,14.5" stroke="#9a9da0" stroke-width="2"/><path d="M4,6.5 H9" stroke="#3d6ea5" stroke-width="1"/></svg>
<svg class="a" style="left:49px;top:39px;" width="16" height="12" viewBox="0 0 16 12"><path d="M1,8 L4,1.5 L7,2 L7.5,6 L8.5,6 L9,2 L12,1.5 L15,8 Z" fill="#2b2b2b"/><circle cx="4" cy="8" r="3.3" fill="#2b2b2b"/><circle cx="12" cy="8" r="3.3" fill="#2b2b2b"/><circle cx="4" cy="8.3" r="1.6" fill="#c8641e"/><circle cx="12" cy="8.3" r="1.6" fill="#c8641e"/></svg>
<div style="left:70px;top:34px;width:1px;height:22px;background:#c6c8ca;"></div>
<svg class="a" style="left:76px;top:37px;" width="16" height="16" viewBox="0 0 16 16"><circle cx="8" cy="8" r="6.3" fill="#fcfcfc" stroke="#232627" stroke-width="1.3"/><path d="M5,5 V11" stroke="#232627" stroke-width="1.4"/><path d="M11,5 L6.2,8 L11,11 Z" fill="#232627"/></svg>
<svg class="a" style="left:98px;top:37px;" width="16" height="16" viewBox="0 0 16 16"><circle cx="8" cy="8" r="6.3" fill="#fcfcfc" stroke="#232627" stroke-width="1.3"/><path d="M6.3,5 V11 M9.7,5 V11" stroke="#232627" stroke-width="1.5"/></svg>
<svg class="a" style="left:120px;top:37px;" width="16" height="16" viewBox="0 0 16 16"><circle cx="8" cy="8" r="6.3" fill="#fcfcfc" stroke="#232627" stroke-width="1.3"/><path d="M11,5 V11" stroke="#232627" stroke-width="1.4"/><path d="M5,5 L9.8,8 L5,11 Z" fill="#232627"/></svg>
<div style="left:140px;top:36px;width:48px;height:17px;background:#fcfcfc;border:1px solid #bfc1c3;border-radius:2px;box-sizing:border-box;"></div>
<div class="t" style="left:145px;top:39.0px;color:#31363b;font-size:8px;">1 sec</div>
<svg class="a" style="left:176px;top:36.5px;" width="10" height="16" viewBox="0 0 10 16"><path d="M1.5,6 L5,2.5 L8.5,6" fill="none" stroke="#31363b" stroke-width="1.1"/><path d="M1.5,10 L5,13.5 L8.5,10" fill="none" stroke="#31363b" stroke-width="1.1"/></svg>
<div style="left:190px;top:36px;width:15px;height:7px;background:linear-gradient(#f6f7f7,#e9eaeb);border:1px solid #c3c5c7;border-radius:2px;box-sizing:border-box;"></div>
<div style="left:190px;top:45px;width:15px;height:7px;background:linear-gradient(#f6f7f7,#e9eaeb);border:1px solid #c3c5c7;border-radius:2px;box-sizing:border-box;"></div>
<svg class="a" style="left:190px;top:36px;" width="15" height="16" viewBox="0 0 15 16"><path d="M4.5,5 L7.5,2.5 L10.5,5" fill="none" stroke="#6a6e71" stroke-width="0.9"/><path d="M4.5,11.5 L7.5,14 L10.5,11.5" fill="none" stroke="#6a6e71" stroke-width="0.9"/></svg>
<div style="left:210px;top:34.5px;width:20px;height:20.5px;background:#d9dbdc;border:1px solid #cdcfd0;border-radius:3px;box-sizing:border-box;"></div>
<svg class="a" style="left:213px;top:37px;" width="15" height="15" viewBox="0 0 15 15"><rect x="0" y="0" width="15" height="15" fill="#000"/><circle cx="3.5" cy="4" r="1" fill="#e8a0a0"/><circle cx="11" cy="12" r="1.1" fill="#c0b8ff"/><path d="M6,9 L9,7" stroke="#4a7fa8" stroke-width="1"/><circle cx="9.5" cy="2.5" r="0.5" fill="#dd8"/><circle cx="5" cy="12.5" r="0.5" fill="#dd8"/></svg>
<div style="left:232px;top:34.5px;width:20px;height:20.5px;background:#d9dbdc;border:1px solid #cdcfd0;border-radius:3px;box-sizing:border-box;"></div>
<svg class="a" style="left:235px;top:37px;" width="15" height="15" viewBox="0 0 15 15"><rect x="0" y="0" width="15" height="15" fill="#000"/><rect x="2" y="1.5" width="6" height="5" fill="none" stroke="#2aa6b8" stroke-width="1"/><circle cx="11" cy="6" r="2.6" fill="#1a9a1a"/><ellipse cx="6" cy="11" rx="3.5" ry="2" fill="none" stroke="#d02020" stroke-width="1.2" transform="rotate(30 6 11)"/></svg>
<div style="left:254px;top:34.5px;width:20px;height:20.5px;background:#d9dbdc;border:1px solid #cdcfd0;border-radius:3px;box-sizing:border-box;"></div>
<svg class="a" style="left:257px;top:37px;" width="15" height="15" viewBox="0 0 15 15"><rect x="0" y="0" width="15" height="15" fill="#000"/><circle cx="7.5" cy="7.5" r="4.5" fill="#f4c430"/><ellipse cx="7.5" cy="7.5" rx="7" ry="1.8" fill="none" stroke="#e8e020" stroke-width="1.1" transform="rotate(-35 7.5 7.5)"/></svg>
<svg class="a" style="left:279px;top:37px;" width="15" height="15" viewBox="0 0 15 15"><rect x="0" y="0" width="15" height="15" fill="#000"/><circle cx="10" cy="8" r="2.8" fill="#e6e6e6"/><path d="M9,6.5 L1,3 M9,8 L1,8 M9.5,9.5 L4,13" stroke="#bbb" stroke-width="0.7"/></svg>
<div style="left:298px;top:34.5px;width:20px;height:20.5px;background:#d9dbdc;border:1px solid #cdcfd0;border-radius:3px;box-sizing:border-box;"></div>
<svg class="a" style="left:301px;top:37px;" width="15" height="15" viewBox="0 0 15 15"><rect x="0" y="0" width="15" height="15" fill="#000"/><path d="M2,12 L6,8 L9,9 L11,5 L13,3 L12,7 L9,9" fill="none" stroke="#c8c8c8" stroke-width="0.9"/></svg>
<svg class="a" style="left:323px;top:37px;" width="15" height="15" viewBox="0 0 15 15"><rect x="0" y="0" width="15" height="15" fill="#000"/><text x="7.5" y="10.5" text-anchor="middle" font-family="Liberation Serif" font-weight="bold" font-size="8" fill="#d8d040">Ori</text></svg>
<svg class="a" style="left:346px;top:39px;" width="13" height="12" viewBox="0 0 13 12"><rect x="0" y="0" width="13" height="12" fill="#000"/><path d="M2,3 L5,1 L8,3 L11,2 L10,6 L12,9 L8,10 L6,11 L3,9 L1,6 Z" fill="none" stroke="#7fb8d8" stroke-width="0.8"/></svg>
<div style="left:364px;top:34.5px;width:21px;height:20.5px;background:#d9dbdc;border:1px solid #cdcfd0;border-radius:3px;box-sizing:border-box;"></div>
<svg class="a" style="left:367px;top:37px;" width="15" height="15" viewBox="0 0 15 15"><rect x="0" y="0" width="15" height="15" fill="#000"/><path d="M3.5,15 C3.5,9 4,6 7,5.5 C9,5 9,4 15,3.5" fill="none" stroke="#8795a8" stroke-width="3.2"/></svg>
<svg class="a" style="left:389px;top:37px;" width="15" height="15" viewBox="0 0 15 15"><rect x="0" y="0" width="15" height="15" fill="#000"/><g fill="none" stroke="#1f5fe8" stroke-width="1.1"><path d="M0,5 Q6,4 10,0 M0,10 Q9,8 15,0 M3,15 Q9,10 15,5 M9,15 Q12,12 15,10"/><path d="M0,10 Q4,11 5,15 M0,4 Q7,6 11,15 M4,0 Q9,5 15,11 M10,0 Q12,3 15,5"/></g></svg>
<div style="left:409px;top:34.5px;width:20px;height:20.5px;background:#d9dbdc;border:1px solid #cdcfd0;border-radius:3px;box-sizing:border-box;"></div>
<svg class="a" style="left:411px;top:37px;" width="15" height="15" viewBox="0 0 15 15"><rect x="0" y="0" width="15" height="15" fill="#000"/><path d="M0,4 Q7.5,1 15,4 M0,9 Q7.5,6 15,9 M0,13 Q7.5,11 15,13 M7.5,0 V15 M3.5,0 Q2,8 3.5,15 M11.5,0 Q13,8 11.5,15" fill="none" stroke="#2060e0" stroke-width="1.1"/></svg>
<div style="left:431px;top:34.5px;width:20px;height:20.5px;background:#d9dbdc;border:1px solid #cdcfd0;border-radius:3px;box-sizing:border-box;"></div>
<svg class="a" style="left:434px;top:37px;" width="15" height="15" viewBox="0 0 15 15"><rect x="0" y="0" width="15" height="15" fill="#000"/><path d="M0,10 Q7.5,12 15,10 V15 H0 Z" fill="#10b010"/></svg>
<svg class="a" style="left:456px;top:37px;" width="15" height="15" viewBox="0 0 15 15"><rect x="0" y="0" width="15" height="15" fill="#5a2a10"/><ellipse cx="7.5" cy="7.5" rx="6" ry="3.5" fill="#e07020" transform="rotate(-40 7.5 7.5)"/><circle cx="7.5" cy="7.5" r="2" fill="#fff4d0"/></svg>
<div style="left:605px;top:62px;width:634px;height:475px;background:#eff0f1;border:1px solid #f8f8f9;border-radius:3px 3px 0 0;box-sizing:border-box;"></div>
<svg class="a" style="left:609px;top:64px;" width="12" height="13" viewBox="0 0 12 13"><g transform="scale(0.85)"><ellipse cx="3" cy="3" rx="2.6" ry="2.2" fill="#bbb" stroke="#222" stroke-width="0.8"/><path d="M3,2 L10,7 L8.5,9 L1.8,4.2 Z" fill="#222"/><path d="M6,8 L4.5,12 M6,8 L7.5,12" stroke="#222" stroke-width="0.9"/></g></svg>
<div class="t" style="left:770.5px;top:64.0px;width:300px;text-align:center;color:#a9acae;font-size:8px;">INDI Control Panel — KStars</div>
<svg class="a" style="left:1198px;top:63px;" width="40" height="12" viewBox="0 0 40 12"><path d="M3,4.5 L6,7.5 L9,4.5" fill="none" stroke="#b0b3b5" stroke-width="1.1"/><path d="M17,7.5 L20,4.5 L23,7.5" fill="none" stroke="#b0b3b5" stroke-width="1.1"/><circle cx="33" cy="6" r="5" fill="#b8bbbd"/><path d="M31,4 L35,8 M35,4 L31,8" stroke="#eff0f1" stroke-width="1.2"/></svg>
<div style="left:615.5px;top:103.5px;width:613.5px;height:395.5px;border:1px solid #cdd0d1;border-radius:2px;box-sizing:border-box;background:#f0f1f2;"></div>
<div style="left:616px;top:85.5px;width:51px;height:19.0px;background:#f0f1f2;border:1px solid #cdd0d1;border-bottom:none;border-radius:2px 2px 0 0;box-sizing:border-box;"></div>
<div class="t" style="left:491.5px;top:89.5px;width:300px;text-align:center;color:#31363b;font-size:8px;">EQMod</div>
<div style="left:667px;top:86.5px;width:52.5px;height:16.5px;background:#d4d5d6;border-left:1px solid #c1c3c4;box-sizing:border-box;"></div>
<div class="t" style="left:543.25px;top:89.5px;width:300px;text-align:center;color:#31363b;font-size:8px;">Nikon DSLR</div>
<div style="left:719.5px;top:86.5px;width:67.5px;height:16.5px;background:#d4d5d6;border-left:1px solid #c1c3c4;box-sizing:border-box;"></div>
<div class="t" style="left:603.25px;top:89.5px;width:300px;text-align:center;color:#31363b;font-size:8px;">Baader SteelDrive</div>
<div style="left:787px;top:86.5px;width:52px;height:16.5px;background:#d4d5d6;border-left:1px solid #c1c3c4;box-sizing:border-box;"></div>
<div class="t" style="left:663.0px;top:89.5px;width:300px;text-align:center;color:#31363b;font-size:8px;">Joystick</div>
<div style="left:839px;top:86.5px;width:52px;height:16.5px;background:#d4d5d6;border-left:1px solid #c1c3c4;box-sizing:border-box;"></div>
<div class="t" style="left:715.0px;top:89.5px;width:300px;text-align:center;color:#31363b;font-size:8px;">SBIG CCD</div>
<div style="left:618.5px;top:124.5px;width:608.5px;height:322.5px;border:1px solid #cdd0d1;border-radius:2px;box-sizing:border-box;background:#f0f1f2;"></div>
<div style="left:618.5px;top:105.5px;width:50.5px;height:20.0px;background:#f0f1f2;border:1px solid #cdd0d1;border-bottom:none;border-radius:2px 2px 0 0;box-sizing:border-box;"></div>
<div class="t" style="left:493.75px;top:109.5px;width:300px;text-align:center;color:#31363b;font-size:8px;">Main Control</div>
<div style="left:669px;top:106px;width:53px;height:18.5px;background:#d4d5d6;border-left:1px solid #c1c3c4;box-sizing:border-box;"></div>
<div class="t" style="left:545.5px;top:109.5px;width:300px;text-align:center;color:#31363b;font-size:8px;">Options</div>
<div style="left:722px;top:106px;width:52.200000000000045px;height:18.5px;background:#d4d5d6;border-left:1px solid #c1c3c4;box-sizing:border-box;"></div>
<div class="t" style="left:598.1px;top:109.5px;width:300px;text-align:center;color:#31363b;font-size:8px;">Simulation</div>
<div style="left:774.2px;top:106px;width:59.0px;height:18.5px;background:#d4d5d6;border-left:1px solid #c1c3c4;box-sizing:border-box;"></div>
<div class="t" style="left:653.7px;top:109.5px;width:300px;text-align:center;color:#31363b;font-size:8px;">Motion Control</div>
<div style="left:833.2px;top:106px;width:66.0px;height:18.5px;background:#d4d5d6;border-left:1px solid #c1c3c4;box-sizing:border-box;"></div>
<div class="t" style="left:716.2px;top:109.5px;width:300px;text-align:center;color:#31363b;font-size:8px;">Site Management</div>
<div style="left:899.2px;top:106px;width:52.5px;height:18.5px;background:#d4d5d6;border-left:1px solid #c1c3c4;box-sizing:border-box;"></div>
<div class="t" style="left:775.45px;top:109.5px;width:300px;text-align:center;color:#31363b;font-size:8px;">Firmware</div>
<div style="left:951.7px;top:106px;width:51.59999999999991px;height:18.5px;background:#d4d5d6;border-left:1px solid #c1c3c4;box-sizing:border-box;"></div>
<div class="t" style="left:827.5px;top:109.5px;width:300px;text-align:center;color:#31363b;font-size:8px;">Motor Status</div>
<div style="left:1003.3px;top:106px;width:52.200000000000045px;height:18.5px;background:#d4d5d6;border-left:1px solid #c1c3c4;box-sizing:border-box;"></div>
<div class="t" style="left:879.4000000000001px;top:109.5px;width:300px;text-align:center;color:#31363b;font-size:8px;">Sync</div>
<div style="left:1055.5px;top:106px;width:51.5px;height:18.5px;background:#d4d5d6;border-left:1px solid #c1c3c4;box-sizing:border-box;"></div>
<div class="t" style="left:931.25px;top:109.5px;width:300px;text-align:center;color:#31363b;font-size:8px;">Align</div>
<div style="left:1107px;top:106px;width:51.799999999999955px;height:18.5px;background:#d4d5d6;border-left:1px solid #c1c3c4;box-sizing:border-box;"></div>
<div class="t" style="left:982.9000000000001px;top:109.5px;width:300px;text-align:center;color:#31363b;font-size:8px;">Horizon</div>
<div style="left:621.5px;top:127.5px;width:603.0px;height:317.5px;border:1px solid #d6d8d9;box-sizing:border-box;background:#eff0f1;"></div>
<div style="left:718px;top:142.5px;width:53px;height:20.0px;background:linear-gradient(#f4f5f5,#e6e7e8);border:1px solid #b9bbbd;border-radius:2px;box-sizing:border-box;box-shadow:0 1px 0 rgba(0,0,0,0.06);"></div>
<div class="t" style="left:594.5px;top:147.0px;width:300px;text-align:center;color:#31363b;font-size:8px;font-weight:bold;letter-spacing:-0.6px;">Connect</div>
<div style="left:776.5px;top:142.5px;width:53.5px;height:20.0px;background:linear-gradient(#f4f5f5,#e6e7e8);border:1px solid #b9bbbd;border-radius:2px;box-sizing:border-box;box-shadow:0 1px 0 rgba(0,0,0,0.06);"></div>
<div class="t" style="left:653.25px;top:147.0px;width:300px;text-align:center;color:#31363b;font-size:8px;">Disconnect</div>
<div style="left:718px;top:168.5px;width:53px;height:20.0px;background:linear-gradient(#f4f5f5,#e6e7e8);border:1px solid #b9bbbd;border-radius:2px;box-sizing:border-box;box-shadow:0 1px 0 rgba(0,0,0,0.06);"></div>
<div class="t" style="left:594.5px;top:173.0px;width:300px;text-align:center;color:#31363b;font-size:8px;font-weight:bold;letter-spacing:-0.6px;">Track</div>
<div style="left:776.5px;top:168.5px;width:53.5px;height:20.0px;background:linear-gradient(#f4f5f5,#e6e7e8);border:1px solid #b9bbbd;border-radius:2px;box-sizing:border-box;box-shadow:0 1px 0 rgba(0,0,0,0.06);"></div>
<div class="t" style="left:653.25px;top:173.0px;width:300px;text-align:center;color:#31363b;font-size:8px;">Slew</div>
<div style="left:835px;top:168.5px;width:53.5px;height:20.0px;background:linear-gradient(#f4f5f5,#e6e7e8);border:1px solid #b9bbbd;border-radius:2px;box-sizing:border-box;box-shadow:0 1px 0 rgba(0,0,0,0.06);"></div>
<div class="t" style="left:711.75px;top:173.0px;width:300px;text-align:center;color:#31363b;font-size:8px;">Sync</div>
<div style="left:718px;top:197px;width:113px;height:11.5px;border:1px solid #4a4d50;border-radius:1px;box-sizing:border-box;background:#f1f2f3;box-shadow:inset 1px 1px 0 #9a9c9e;"></div>
<div class="t" style="left:624.5px;top:197.2px;width:300px;text-align:center;color:#31363b;font-size:8px;">RA (hh:mm:ss)</div>
<div style="left:835.5px;top:194.5px;width:112.5px;height:17.0px;border:1px solid #d4d6d7;border-radius:2px;box-sizing:border-box;background:#fcfcfc;"></div>
<div class="t" style="left:741.75px;top:197.5px;width:300px;text-align:center;color:#31363b;font-size:8px;">1:42:08</div>
<div style="left:953.3px;top:194.5px;width:112.29999999999995px;height:17.0px;border:1px solid #d4d6d7;border-radius:2px;box-sizing:border-box;background:#fcfcfc;"></div>
<div class="t" style="left:961.3px;top:197.5px;color:#31363b;font-size:8px;">0:00:00</div>
<div style="left:718px;top:220.5px;width:113px;height:11.5px;border:1px solid #4a4d50;border-radius:1px;box-sizing:border-box;background:#f1f2f3;box-shadow:inset 1px 1px 0 #9a9c9e;"></div>
<div class="t" style="left:624.5px;top:220.8px;width:300px;text-align:center;color:#31363b;font-size:8px;">DEC (dd:mm:ss)</div>
<div style="left:835.5px;top:217.5px;width:112.5px;height:18.0px;border:1px solid #d4d6d7;border-radius:2px;box-sizing:border-box;background:#fcfcfc;"></div>
<div class="t" style="left:741.75px;top:221.0px;width:300px;text-align:center;color:#31363b;font-size:8px;">90:00:00</div>
<div style="left:953.3px;top:217.5px;width:112.29999999999995px;height:18.0px;border:1px solid #d4d6d7;border-radius:2px;box-sizing:border-box;background:#fcfcfc;"></div>
<div class="t" style="left:961.3px;top:221.0px;color:#31363b;font-size:8px;">0:00:00</div>
<div style="left:1071.3px;top:194.5px;width:31.0px;height:41.0px;background:linear-gradient(#f4f5f5,#e6e7e8);border:1px solid #b9bbbd;border-radius:2px;box-sizing:border-box;box-shadow:0 1px 0 rgba(0,0,0,0.06);"></div>
<div class="t" style="left:936.8px;top:209.5px;width:300px;text-align:center;color:#31363b;font-size:8px;">Set</div>
<div style="left:718px;top:241.3px;width:53px;height:19.0px;background:linear-gradient(#f4f5f5,#e6e7e8);border:1px solid #b9bbbd;border-radius:2px;box-sizing:border-box;box-shadow:0 1px 0 rgba(0,0,0,0.06);"></div>
<div class="t" style="left:594.5px;top:245.3px;width:300px;text-align:center;color:#31363b;font-size:8px;">Abort</div>
<div style="left:718px;top:266px;width:53px;height:19px;background:linear-gradient(#f4f5f5,#e6e7e8);border:1px solid #b9bbbd;border-radius:2px;box-sizing:border-box;box-shadow:0 1px 0 rgba(0,0,0,0.06);"></div>
<div class="t" style="left:594.5px;top:270.0px;width:300px;text-align:center;color:#31363b;font-size:8px;">Park</div>
<div style="left:718px;top:291px;width:53px;height:19px;background:linear-gradient(#f4f5f5,#e6e7e8);border:1px solid #b9bbbd;border-radius:2px;box-sizing:border-box;box-shadow:0 1px 0 rgba(0,0,0,0.06);"></div>
<div class="t" style="left:594.5px;top:295.0px;width:300px;text-align:center;color:#31363b;font-size:8px;">Sidereal</div>
<div style="left:776.5px;top:291px;width:53.5px;height:19px;background:linear-gradient(#f4f5f5,#e6e7e8);border:1px solid #b9bbbd;border-radius:2px;box-sizing:border-box;box-shadow:0 1px 0 rgba(0,0,0,0.06);"></div>
<div class="t" style="left:653.25px;top:295.0px;width:300px;text-align:center;color:#31363b;font-size:8px;">Lunar</div>
<div style="left:835px;top:291px;width:53.5px;height:19px;background:linear-gradient(#f4f5f5,#e6e7e8);border:1px solid #b9bbbd;border-radius:2px;box-sizing:border-box;box-shadow:0 1px 0 rgba(0,0,0,0.06);"></div>
<div class="t" style="left:711.75px;top:295.0px;width:300px;text-align:center;color:#31363b;font-size:8px;">Solar</div>
<div style="left:893.6px;top:291px;width:53.39999999999998px;height:19px;background:linear-gradient(#f4f5f5,#e6e7e8);border:1px solid #b9bbbd;border-radius:2px;box-sizing:border-box;box-shadow:0 1px 0 rgba(0,0,0,0.06);"></div>
<div class="t" style="left:770.3px;top:295.0px;width:300px;text-align:center;color:#31363b;font-size:8px;">Custom</div>
<div style="left:718px;top:319px;width:113px;height:11px;border:1px solid #4a4d50;border-radius:1px;box-sizing:border-box;background:#f1f2f3;box-shadow:inset 1px 1px 0 #9a9c9e;"></div>
<div class="t" style="left:624.5px;top:319.0px;width:300px;text-align:center;color:#31363b;font-size:8px;">RA (arcsecs/s)</div>
<div style="left:835.5px;top:316px;width:112.5px;height:17px;border:1px solid #d4d6d7;border-radius:2px;box-sizing:border-box;background:#fcfcfc;"></div>
<div class="t" style="left:741.75px;top:319.0px;width:300px;text-align:center;color:#31363b;font-size:8px;">15.041067</div>
<div style="left:953.3px;top:316px;width:112.29999999999995px;height:17px;border:1px solid #d4d6d7;border-radius:2px;box-sizing:border-box;background:#fcfcfc;"></div>
<div class="t" style="left:961.3px;top:319.0px;color:#31363b;font-size:8px;">15.041067</div>
<div style="left:718px;top:342.3px;width:113px;height:11.300000000000011px;border:1px solid #4a4d50;border-radius:1px;box-sizing:border-box;background:#f1f2f3;box-shadow:inset 1px 1px 0 #9a9c9e;"></div>
<div class="t" style="left:624.5px;top:342.5px;width:300px;text-align:center;color:#31363b;font-size:8px;">DE (arcsecs/s)</div>
<div style="left:835.5px;top:339px;width:112.5px;height:17.399999999999977px;border:1px solid #d4d6d7;border-radius:2px;box-sizing:border-box;background:#fcfcfc;"></div>
<div class="t" style="left:741.75px;top:342.2px;width:300px;text-align:center;color:#31363b;font-size:8px;">0.000000</div>
<div style="left:953.3px;top:339px;width:112.29999999999995px;height:17.399999999999977px;border:1px solid #d4d6d7;border-radius:2px;box-sizing:border-box;background:#fcfcfc;"></div>
<div class="t" style="left:961.3px;top:342.2px;color:#31363b;font-size:8px;">0.000000</div>
<div style="left:1071.3px;top:316px;width:31.0px;height:40.39999999999998px;background:linear-gradient(#f4f5f5,#e6e7e8);border:1px solid #b9bbbd;border-radius:2px;box-sizing:border-box;box-shadow:0 1px 0 rgba(0,0,0,0.06);"></div>
<div class="t" style="left:936.8px;top:330.7px;width:300px;text-align:center;color:#31363b;font-size:8px;">Set</div>
<div style="left:718px;top:366px;width:113px;height:11px;border:1px solid #4a4d50;border-radius:1px;box-sizing:border-box;background:#f1f2f3;box-shadow:inset 1px 1px 0 #9a9c9e;"></div>
<div class="t" style="left:624.5px;top:366.0px;width:300px;text-align:center;color:#31363b;font-size:8px;">Altitude</div>
<div style="left:835.5px;top:362.6px;width:112.5px;height:17.399999999999977px;border:1px solid #d4d6d7;border-radius:2px;box-sizing:border-box;background:#fcfcfc;"></div>
<div class="t" style="left:741.75px;top:365.8px;width:300px;text-align:center;color:#31363b;font-size:8px;">29:06:48</div>
<div style="left:718px;top:389.5px;width:113px;height:11.0px;border:1px solid #4a4d50;border-radius:1px;box-sizing:border-box;background:#f1f2f3;box-shadow:inset 1px 1px 0 #9a9c9e;"></div>
<div class="t" style="left:624.5px;top:389.5px;width:300px;text-align:center;color:#31363b;font-size:8px;">Azimuth</div>
<div style="left:835.5px;top:386.4px;width:112.5px;height:17.200000000000045px;border:1px solid #d4d6d7;border-radius:2px;box-sizing:border-box;background:#fcfcfc;"></div>
<div class="t" style="left:741.75px;top:389.5px;width:300px;text-align:center;color:#31363b;font-size:8px;">360:00:00</div>
<div style="left:703px;top:410px;width:88.29999999999995px;height:20px;background:linear-gradient(#f4f5f5,#e6e7e8);border:1px solid #b9bbbd;border-radius:2px;box-sizing:border-box;box-shadow:0 1px 0 rgba(0,0,0,0.06);"></div>
<div class="t" style="left:486.70000000000005px;top:414.5px;width:300px;text-align:right;color:#31363b;font-size:8px;font-weight:bold;letter-spacing:-0.65px;">East (pointing west)</div>
<div style="left:796px;top:410px;width:72.70000000000005px;height:20px;background:linear-gradient(#f4f5f5,#e6e7e8);border:1px solid #b9bbbd;border-radius:2px;box-sizing:border-box;box-shadow:0 1px 0 rgba(0,0,0,0.06);"></div>
<div class="t" style="left:682.35px;top:414.5px;width:300px;text-align:center;color:#31363b;font-size:8px;">West (pointing east)</div>
<div style="left:619px;top:436px;width:600px;height:8px;overflow:hidden;"><div style="left:99px;top:0;width:53px;height:19px;background:linear-gradient(#f4f5f5,#e6e7e8);border:1px solid #b9bbbd;border-radius:2px;box-sizing:border-box;"></div><div style="left:157.5px;top:0;width:53.5px;height:19px;background:linear-gradient(#f4f5f5,#e6e7e8);border:1px solid #b9bbbd;border-radius:2px;box-sizing:border-box;"></div><div class="t" style="left:100px;top:5px;">End Move</div></div><svg class="a" style="left:1211px;top:129px;" width="12" height="316" viewBox="0 0 12 316"><path d="M2.5,7.5 L5.5,4.5 L8.5,7.5" fill="none" stroke="#7c7f82" stroke-width="1"/><rect x="3" y="12" width="5.5" height="292" rx="2.75" fill="#c4c6c8"/><rect x="3" y="12" width="5.5" height="272" rx="2.75" fill="#7f8285"/><path d="M2.5,310 L5.5,313 L8.5,310" fill="none" stroke="#31363b" stroke-width="1.1"/></svg>
<div style="left:619px;top:446px;width:609.7px;height:52.69999999999999px;border:1px solid #d6d8d9;box-sizing:border-box;"></div>
<div style="left:620px;top:448.7px;width:606.4000000000001px;height:48.30000000000001px;background:#fcfcfc;border:1px solid #d0d2d3;box-sizing:border-box;overflow:hidden;"></div>
<div class="t" style="left:544.5px;top:451.1px;width:300px;text-align:right;color:#31363b;font-size:8px;letter-spacing:-0.3px;">2015-01-29T07:52:26: [INFO] Updating observer location: long = 48.1008 lat = 29.1133</div>
<div class="t" style="left:567.2px;top:461.2px;width:300px;text-align:right;color:#31363b;font-size:8px;letter-spacing:-0.3px;">2015-01-29T07:52:26: [INFO] Setting UTC Time to 2015-01-29T07:52:26, Offset 3</div>
<div class="t" style="left:490px;top:471.3px;width:300px;text-align:right;color:#31363b;font-size:8px;letter-spacing:-0.3px;">2015-01-29T07:52:26: [INFO] Site configuration applied.</div>
<div class="t" style="left:544.5px;top:480.9px;width:300px;text-align:right;color:#31363b;font-size:8px;letter-spacing:-0.3px;">2015-01-29T07:52:26: [INFO] Updating observer location: long = 48.1008 lat = 29.1133</div>
<div class="t" style="left:522px;top:490.9px;width:300px;text-align:right;color:#31363b;font-size:8px;letter-spacing:-0.3px;">2015-01-29T07:52:26: [INFO] Loading device configuration</div>
<div style="left:620px;top:497px;width:606.4000000000001px;height:2px;background:#eff0f1;"></div>
<svg class="a" style="left:1213px;top:450px;" width="12" height="46" viewBox="0 0 12 46"><path d="M3,8 L6,5 L9,8" fill="none" stroke="#9a9da0" stroke-width="1"/><rect x="3.5" y="12" width="5" height="19" rx="2.5" fill="#c4c6c8"/><rect x="3.5" y="12" width="5" height="8" rx="2.5" fill="#7f8285"/><path d="M3,37 L6,40 L9,37" fill="none" stroke="#31363b" stroke-width="1.1"/></svg>
<div style="left:1114.7px;top:507.7px;width:53.700000000000045px;height:19.30000000000001px;background:linear-gradient(#f4f5f5,#e6e7e8);border:1px solid #b9bbbd;border-radius:2px;box-sizing:border-box;box-shadow:0 1px 0 rgba(0,0,0,0.06);"></div>
<div class="t" style="left:991.5500000000002px;top:511.9px;width:300px;text-align:center;color:#31363b;font-size:8px;">Clear</div>
<div style="left:1176px;top:507.7px;width:53.200000000000045px;height:19.30000000000001px;background:linear-gradient(#f4f5f5,#e6e7e8);border:1px solid #b9bbbd;border-radius:2px;box-sizing:border-box;box-shadow:0 1px 0 rgba(0,0,0,0.06);"></div>
<div class="t" style="left:1052.6px;top:511.9px;width:300px;text-align:center;color:#31363b;font-size:8px;">Close</div>
<div style="left:53px;top:126px;width:679px;height:519.5px;background:#eff0f1;border:1px solid #f9f9fa;border-radius:3px 3px 2px 2px;box-sizing:border-box;box-shadow:0 1px 5px 2px rgba(0,0,0,0.45);"></div>
<div style="left:53px;top:126px;width:679px;height:16px;background:#4b5259;border-radius:3px 3px 0 0;"></div>
<div style="left:53px;top:142px;width:679px;height:1.5px;background:#3daee9;"></div>
<svg class="a" style="left:56px;top:128px;" width="12" height="13" viewBox="0 0 12 13"><ellipse cx="3" cy="3" rx="2.6" ry="2.2" fill="#e8e8e8" stroke="#ddd" stroke-width="0.6"/><path d="M3,2 L10,7 L8.5,9 L1.8,4.2 Z" fill="#1a1a1a" stroke="#bbb" stroke-width="0.4"/><path d="M6,8 L4.5,12 M6,8 L7.5,12" stroke="#888" stroke-width="0.9"/></svg>
<div class="t" style="left:240px;top:128.8px;width:300px;text-align:center;color:#e8e9ea;font-size:8px;">Ekos — KStars</div>
<svg class="a" style="left:678px;top:127px;" width="54" height="15" viewBox="0 0 54 15"><text x="7" y="11" text-anchor="middle" font-family="Liberation Sans" font-size="10" fill="#eff0f1">?</text><path d="M17,5.5 L20.5,9 L24,5.5" fill="none" stroke="#eff0f1" stroke-width="1.2"/><path d="M30,9 L33.5,5.5 L37,9" fill="none" stroke="#eff0f1" stroke-width="1.2"/><circle cx="46.3" cy="7.2" r="5.2" fill="#fcfcfc"/><path d="M44.3,5.2 L48.3,9.2 M48.3,5.2 L44.3,9.2" stroke="#4b5259" stroke-width="1.4"/></svg>
<div style="left:62.5px;top:168px;width:660.0px;height:389px;border:1px solid #cdd0d1;border-radius:2px;box-sizing:border-box;background:#f0f1f2;"></div>
<div style="left:63px;top:151px;width:51.599999999999994px;height:17.5px;background:#d3d4d5;border-left:1px solid #c1c3c4;box-sizing:border-box;"></div>
<div class="t" style="left:-61.2px;top:154.0px;width:300px;text-align:center;color:#31363b;font-size:8px;">Setup</div>
<div style="left:114.6px;top:151px;width:52.20000000000002px;height:17.5px;background:#d3d4d5;border-left:1px solid #c1c3c4;box-sizing:border-box;"></div>
<div class="t" style="left:-9.300000000000011px;top:154.0px;width:300px;text-align:center;color:#31363b;font-size:8px;">Mount</div>
<div style="left:166.8px;top:150px;width:51.19999999999999px;height:19px;background:#f0f1f2;border:1px solid #cdd0d1;border-bottom:none;border-radius:2px 2px 0 0;box-sizing:border-box;"></div>
<div class="t" style="left:42.400000000000006px;top:154.0px;width:300px;text-align:center;color:#31363b;font-size:8px;">CCD</div>
<div style="left:218px;top:151px;width:52.89999999999998px;height:17.5px;background:#d3d4d5;border-left:1px solid #c1c3c4;box-sizing:border-box;"></div>
<div class="t" style="left:94.44999999999999px;top:154.0px;width:300px;text-align:center;color:#31363b;font-size:8px;">Focus</div>
<div style="left:270.9px;top:151px;width:51.80000000000001px;height:17.5px;background:#d3d4d5;border-left:1px solid #c1c3c4;box-sizing:border-box;"></div>
<div class="t" style="left:146.79999999999995px;top:154.0px;width:300px;text-align:center;color:#31363b;font-size:8px;">Alignment</div>
<div style="left:322.7px;top:151px;width:51.30000000000001px;height:17.5px;background:#d3d4d5;border-left:1px solid #c1c3c4;box-sizing:border-box;"></div>
<div class="t" style="left:198.35000000000002px;top:154.0px;width:300px;text-align:center;color:#31363b;font-size:8px;">Guide</div>
<div style="left:69px;top:175.3px;width:321px;height:209.5px;border:1px solid #cfd1d2;border-radius:2px;box-sizing:border-box;background:#f1f2f3;"></div>
<div class="t" style="left:79px;top:177.8px;width:300px;text-align:center;color:#31363b;font-size:8px;">CCD</div>
<div class="t" style="left:73.8px;top:199.3px;color:#31363b;font-size:8px;">Device:</div>
<div style="left:109.5px;top:196.3px;width:116.9px;height:18.0px;background:linear-gradient(#f1f2f2,#e4e5e6);border:1px solid #b9bbbd;border-radius:2px;box-sizing:border-box;box-shadow:0 1px 0 rgba(0,0,0,0.06);"></div>
<div class="t" style="left:113.5px;top:199.8px;color:#31363b;font-size:8px;">Nikon DSLR</div>
<svg class="a" style="left:213.4px;top:201.3px;" width="10" height="8" viewBox="0 0 10 8"><path d="M1.5,2.5 L5,6 L8.5,2.5" fill="none" stroke="#31363b" stroke-width="1.3"/></svg>
<div class="t" style="left:73.8px;top:222.8px;color:#31363b;font-size:8px;">Exposure:</div>
<div style="left:109.5px;top:219.3px;width:116.1px;height:18.099999999999994px;background:#fcfcfc;border:1px solid #bfc1c3;border-radius:2px;box-sizing:border-box;"></div>
<div class="t" style="left:114.5px;top:222.9px;color:#31363b;font-size:8px;">60.000</div>
<svg class="a" style="left:213.6px;top:220.35000000000002px;" width="10" height="16" viewBox="0 0 10 16"><path d="M1.5,6 L5,2.5 L8.5,6" fill="none" stroke="#31363b" stroke-width="1.1"/><path d="M1.5,10 L5,13.5 L8.5,10" fill="none" stroke="#31363b" stroke-width="1.1"/></svg>
<div class="t" style="left:231px;top:222.8px;color:#31363b;font-size:8px;">Binning:</div>
<div class="t" style="left:261px;top:222.8px;color:#31363b;font-size:8px;">X:</div>
<div style="left:271.7px;top:219.3px;width:48.5px;height:18.099999999999994px;background:#f3f4f4;border:1px solid #d3d5d6;border-radius:2px;box-sizing:border-box;"></div>
<div class="t" style="left:276.7px;top:222.9px;color:#a7aaad;font-size:8px;">1</div>
<svg class="a" style="left:308.2px;top:220.35000000000002px;" width="10" height="16" viewBox="0 0 10 16"><path d="M1.5,6 L5,2.5 L8.5,6" fill="none" stroke="#a7aaad" stroke-width="1.1"/><path d="M1.5,10 L5,13.5 L8.5,10" fill="none" stroke="#a7aaad" stroke-width="1.1"/></svg>
<div class="t" style="left:325px;top:222.8px;color:#31363b;font-size:8px;">Y:</div>
<div style="left:336.4px;top:219.3px;width:48.5px;height:18.099999999999994px;background:#f3f4f4;border:1px solid #d3d5d6;border-radius:2px;box-sizing:border-box;"></div>
<div class="t" style="left:341.4px;top:222.9px;color:#a7aaad;font-size:8px;">1</div>
<svg class="a" style="left:372.9px;top:220.35000000000002px;" width="10" height="16" viewBox="0 0 10 16"><path d="M1.5,6 L5,2.5 L8.5,6" fill="none" stroke="#a7aaad" stroke-width="1.1"/><path d="M1.5,10 L5,13.5 L8.5,10" fill="none" stroke="#a7aaad" stroke-width="1.1"/></svg>
<div class="t" style="left:73.8px;top:246.7px;color:#31363b;font-size:8px;">Frame:</div>
<div class="t" style="left:108.4px;top:246.7px;color:#31363b;font-size:8px;">X:</div>
<div style="left:119.2px;top:243.1px;width:45.60000000000001px;height:17.900000000000006px;background:#fcfcfc;border:1px solid #bfc1c3;border-radius:2px;box-sizing:border-box;"></div>
<div class="t" style="left:124.2px;top:246.6px;color:#31363b;font-size:8px;">0</div>
<svg class="a" style="left:152.8px;top:244.05px;" width="10" height="16" viewBox="0 0 10 16"><path d="M1.5,6 L5,2.5 L8.5,6" fill="none" stroke="#31363b" stroke-width="1.1"/><path d="M1.5,10 L5,13.5 L8.5,10" fill="none" stroke="#31363b" stroke-width="1.1"/></svg>
<div class="t" style="left:169.7px;top:246.7px;color:#31363b;font-size:8px;">Y:</div>
<div style="left:181px;top:243.1px;width:44.80000000000001px;height:17.900000000000006px;background:#fcfcfc;border:1px solid #bfc1c3;border-radius:2px;box-sizing:border-box;"></div>
<div class="t" style="left:186px;top:246.6px;color:#31363b;font-size:8px;">0</div>
<svg class="a" style="left:213.8px;top:244.05px;" width="10" height="16" viewBox="0 0 10 16"><path d="M1.5,6 L5,2.5 L8.5,6" fill="none" stroke="#31363b" stroke-width="1.1"/><path d="M1.5,10 L5,13.5 L8.5,10" fill="none" stroke="#31363b" stroke-width="1.1"/></svg>
<div class="t" style="left:231px;top:246.7px;color:#31363b;font-size:8px;">W:</div>
<div style="left:244.6px;top:243.1px;width:61.900000000000006px;height:17.900000000000006px;background:#fcfcfc;border:1px solid #bfc1c3;border-radius:2px;box-sizing:border-box;"></div>
<div class="t" style="left:249.6px;top:246.6px;color:#31363b;font-size:8px;">1280</div>
<svg class="a" style="left:294.5px;top:244.05px;" width="10" height="16" viewBox="0 0 10 16"><path d="M1.5,6 L5,2.5 L8.5,6" fill="none" stroke="#a7aaad" stroke-width="1.1"/><path d="M1.5,10 L5,13.5 L8.5,10" fill="none" stroke="#31363b" stroke-width="1.1"/></svg>
<div class="t" style="left:311.3px;top:246.7px;color:#31363b;font-size:8px;">H:</div>
<div style="left:323px;top:243.1px;width:61.89999999999998px;height:17.900000000000006px;background:#fcfcfc;border:1px solid #bfc1c3;border-radius:2px;box-sizing:border-box;"></div>
<div class="t" style="left:328px;top:246.6px;color:#31363b;font-size:8px;">1024</div>
<svg class="a" style="left:372.9px;top:244.05px;" width="10" height="16" viewBox="0 0 10 16"><path d="M1.5,6 L5,2.5 L8.5,6" fill="none" stroke="#a7aaad" stroke-width="1.1"/><path d="M1.5,10 L5,13.5 L8.5,10" fill="none" stroke="#31363b" stroke-width="1.1"/></svg>
<div class="t" style="left:73.8px;top:271.0px;color:#31363b;font-size:8px;">Type:</div>
<div style="left:109.5px;top:267.3px;width:116.9px;height:18.599999999999966px;background:linear-gradient(#f1f2f2,#e4e5e6);border:1px solid #b9bbbd;border-radius:2px;box-sizing:border-box;box-shadow:0 1px 0 rgba(0,0,0,0.06);"></div>
<div class="t" style="left:113.5px;top:271.1px;color:#31363b;font-size:8px;">Light</div>
<svg class="a" style="left:213.4px;top:272.6px;" width="10" height="8" viewBox="0 0 10 8"><path d="M1.5,2.5 L5,6 L8.5,2.5" fill="none" stroke="#31363b" stroke-width="1.3"/></svg>
<div class="t" style="left:231px;top:271.0px;color:#a7aaad;font-size:8px;">Temperature:</div>
<div style="left:285.1px;top:267.3px;width:41.299999999999955px;height:18.599999999999966px;background:#f3f4f4;border:1px solid #d3d5d6;border-radius:2px;box-sizing:border-box;"></div>
<svg class="a" style="left:314.4px;top:268.6px;" width="10" height="16" viewBox="0 0 10 16"><path d="M1.5,6 L5,2.5 L8.5,6" fill="none" stroke="#a7aaad" stroke-width="1.1"/><path d="M1.5,10 L5,13.5 L8.5,10" fill="none" stroke="#a7aaad" stroke-width="1.1"/></svg>
<div style="left:331.6px;top:266.8px;width:53.799999999999955px;height:19.19999999999999px;background:linear-gradient(#eceded,#e3e4e5);border:1px solid #c9cbcc;border-radius:2px;box-sizing:border-box;box-shadow:0 1px 0 rgba(0,0,0,0.06);"></div>
<div class="t" style="left:208.5px;top:270.9px;width:300px;text-align:center;color:#a7aaad;font-size:8px;">Set</div>
<div class="t" style="left:73.8px;top:294.5px;color:#31363b;font-size:8px;">Prefix:</div>
<div style="left:109.5px;top:291px;width:116.30000000000001px;height:18.5px;background:#fcfcfc;border:1px solid #c4c6c8;border-radius:2px;box-sizing:border-box;"></div>
<div class="t" style="left:114.5px;top:294.8px;color:#31363b;font-size:8px;">M42</div>
<div style="left:231.5px;top:294.4px;width:12.0px;height:12.0px;background:#fcfcfc;border:1px solid #3daee9;border-radius:2px;box-sizing:border-box;box-shadow:0 0 1px 0.5px rgba(61,174,233,0.35);"></div>
<div style="left:234.0px;top:296.9px;width:7.0px;height:7.0px;background:#3daee9;border-radius:1px;"></div>
<div class="t" style="left:247.5px;top:295.0px;color:#31363b;font-size:8px;">Type</div>
<div style="left:271.7px;top:294.4px;width:12.0px;height:12.0px;background:#fcfcfc;border:1px solid #3daee9;border-radius:2px;box-sizing:border-box;box-shadow:0 0 1px 0.5px rgba(61,174,233,0.35);"></div>
<div style="left:274.2px;top:296.9px;width:7.0px;height:7.0px;background:#3daee9;border-radius:1px;"></div>
<div class="t" style="left:288px;top:295.0px;color:#31363b;font-size:8px;">Filter</div>
<div style="left:313.6px;top:294.4px;width:12.0px;height:12.0px;background:#fcfcfc;border:1px solid #7f8285;border-radius:2px;box-sizing:border-box;"></div>
<div class="t" style="left:329.3px;top:295.0px;color:#31363b;font-size:8px;">Expose Duration</div>
<div class="t" style="left:73.8px;top:318.0px;color:#31363b;font-size:8px;">Count:</div>
<div style="left:109.5px;top:315px;width:116.0px;height:17.30000000000001px;background:#fcfcfc;border:1px solid #bfc1c3;border-radius:2px;box-sizing:border-box;"></div>
<div class="t" style="left:114.5px;top:318.1px;color:#31363b;font-size:8px;">10</div>
<svg class="a" style="left:213.5px;top:315.65px;" width="10" height="16" viewBox="0 0 10 16"><path d="M1.5,6 L5,2.5 L8.5,6" fill="none" stroke="#31363b" stroke-width="1.1"/><path d="M1.5,10 L5,13.5 L8.5,10" fill="none" stroke="#31363b" stroke-width="1.1"/></svg>
<div class="t" style="left:230.8px;top:318.0px;color:#31363b;font-size:8px;">Delay:</div>
<div style="left:256.2px;top:315px;width:128.5px;height:17.30000000000001px;background:#fcfcfc;border:1px solid #bfc1c3;border-radius:2px;box-sizing:border-box;"></div>
<div class="t" style="left:261.2px;top:318.1px;color:#31363b;font-size:8px;">0</div>
<svg class="a" style="left:372.7px;top:315.65px;" width="10" height="16" viewBox="0 0 10 16"><path d="M1.5,6 L5,2.5 L8.5,6" fill="none" stroke="#31363b" stroke-width="1.1"/><path d="M1.5,10 L5,13.5 L8.5,10" fill="none" stroke="#a7aaad" stroke-width="1.1"/></svg>
<div class="t" style="left:73.8px;top:341.5px;color:#31363b;font-size:8px;">Filters:</div>
<div style="left:109.5px;top:338.5px;width:116.0px;height:17.899999999999977px;background:linear-gradient(#f1f2f2,#e4e5e6);border:1px solid #b9bbbd;border-radius:2px;box-sizing:border-box;box-shadow:0 1px 0 rgba(0,0,0,0.06);"></div>
<div class="t" style="left:113.5px;top:341.9px;color:#31363b;font-size:8px;">--</div>
<svg class="a" style="left:212.5px;top:343.45px;" width="10" height="8" viewBox="0 0 10 8"><path d="M1.5,2.5 L5,6 L8.5,2.5" fill="none" stroke="#31363b" stroke-width="1.3"/></svg>
<div class="t" style="left:231px;top:341.5px;color:#31363b;font-size:8px;">ISO:</div>
<div style="left:250.6px;top:338.5px;width:134.1px;height:17.899999999999977px;background:linear-gradient(#f1f2f2,#e4e5e6);border:1px solid #b9bbbd;border-radius:2px;box-sizing:border-box;box-shadow:0 1px 0 rgba(0,0,0,0.06);"></div>
<div class="t" style="left:254.6px;top:341.9px;color:#31363b;font-size:8px;">100</div>
<svg class="a" style="left:371.7px;top:343.45px;" width="10" height="8" viewBox="0 0 10 8"><path d="M1.5,2.5 L5,6 L8.5,2.5" fill="none" stroke="#31363b" stroke-width="1.3"/></svg>
<div class="t" style="left:73.8px;top:365.0px;color:#31363b;font-size:8px;">Directory:</div>
<div style="left:109.5px;top:362px;width:252.89999999999998px;height:17.30000000000001px;background:#fcfcfc;border:1px solid #c4c6c8;border-radius:2px;box-sizing:border-box;"></div>
<div class="t" style="left:114.5px;top:365.1px;color:#31363b;font-size:8px;">/home/jasem/Pictures</div>
<div style="left:368px;top:362px;width:16.69999999999999px;height:18px;background:linear-gradient(#f4f5f5,#e6e7e8);border:1px solid #b9bbbd;border-radius:2px;box-sizing:border-box;box-shadow:0 1px 0 rgba(0,0,0,0.06);"></div>
<svg class="a" style="left:369.35px;top:364.0px;" width="14" height="14" viewBox="0 0 14 14"><rect x="2" y="3.5" width="10" height="8" fill="#1d5fa5"/><rect x="2" y="6.5" width="10" height="1.2" fill="#cfe2f3"/><rect x="2" y="2.5" width="4" height="1.5" fill="#1d5fa5"/></svg>
<div style="left:395.6px;top:175.6px;width:319.9px;height:183.79999999999998px;border:1px solid #cfd1d2;border-radius:2px;box-sizing:border-box;background:#f1f2f3;"></div>
<div class="t" style="left:405.5px;top:178.3px;width:300px;text-align:center;color:#31363b;font-size:8px;">Sequence Queue</div>
<div style="left:400.8px;top:196.2px;width:19.69999999999999px;height:19.700000000000017px;background:linear-gradient(#f4f5f5,#e6e7e8);border:1px solid #b9bbbd;border-radius:2px;box-sizing:border-box;box-shadow:0 1px 0 rgba(0,0,0,0.06);"></div>
<svg class="a" style="left:403.65px;top:199.05px;" width="14" height="14" viewBox="0 0 14 14"><path d="M7,3 V11 M3,7 H11" stroke="#22a022" stroke-width="2.6" stroke-linecap="round"/></svg>
<div style="left:425.4px;top:196.2px;width:19.600000000000023px;height:19.700000000000017px;background:linear-gradient(#f4f5f5,#e6e7e8);border:1px solid #b9bbbd;border-radius:2px;box-sizing:border-box;box-shadow:0 1px 0 rgba(0,0,0,0.06);"></div>
<svg class="a" style="left:428.2px;top:199.05px;" width="14" height="14" viewBox="0 0 14 14"><path d="M3.2,7 H10.8" stroke="#d42a2a" stroke-width="2.4" stroke-linecap="round"/></svg>
<div style="left:450px;top:196.2px;width:19.600000000000023px;height:19.700000000000017px;background:linear-gradient(#f4f5f5,#e6e7e8);border:1px solid #b9bbbd;border-radius:2px;box-sizing:border-box;box-shadow:0 1px 0 rgba(0,0,0,0.06);"></div>
<svg class="a" style="left:452.8px;top:199.05px;" width="14" height="14" viewBox="0 0 14 14"><defs><linearGradient id="ab" x1="0" y1="0" x2="1" y2="0"><stop offset="0" stop-color="#3d78c0"/><stop offset="0.5" stop-color="#9cc8f2"/><stop offset="1" stop-color="#2a5a9a"/></linearGradient></defs><path d="M7,2 L11.3,7.5 H9 V12 H5 V7.5 H2.7 Z" fill="url(#ab)" stroke="#1b3a6a" stroke-width="0.8" stroke-linejoin="round"/></svg>
<div style="left:474.9px;top:196.2px;width:19.700000000000045px;height:19.700000000000017px;background:linear-gradient(#f4f5f5,#e6e7e8);border:1px solid #b9bbbd;border-radius:2px;box-sizing:border-box;box-shadow:0 1px 0 rgba(0,0,0,0.06);"></div>
<svg class="a" style="left:477.75px;top:199.05px;" width="14" height="14" viewBox="0 0 14 14"><defs><linearGradient id="ab" x1="0" y1="0" x2="1" y2="0"><stop offset="0" stop-color="#3d78c0"/><stop offset="0.5" stop-color="#9cc8f2"/><stop offset="1" stop-color="#2a5a9a"/></linearGradient></defs><path d="M7,12 L11.3,6.5 H9 V2 H5 V6.5 H2.7 Z" fill="url(#ab)" stroke="#1b3a6a" stroke-width="0.8" stroke-linejoin="round"/></svg>
<div style="left:499.5px;top:196.2px;width:19.600000000000023px;height:19.700000000000017px;background:linear-gradient(#f4f5f5,#e6e7e8);border:1px solid #b9bbbd;border-radius:2px;box-sizing:border-box;box-shadow:0 1px 0 rgba(0,0,0,0.06);"></div>
<svg class="a" style="left:502.3px;top:199.05px;" width="14" height="14" viewBox="0 0 14 14"><rect x="2.5" y="2.5" width="9" height="9" rx="1.2" fill="#f28a1c"/><path d="M4.7,4.5 V7.3 A2.3,2.3 0 0 0 9.3,7.3 V5.5" fill="none" stroke="#ffe36a" stroke-width="1.3"/></svg>
<div style="left:642.4px;top:196.2px;width:19.600000000000023px;height:19.700000000000017px;background:linear-gradient(#f4f5f5,#e6e7e8);border:1px solid #b9bbbd;border-radius:2px;box-sizing:border-box;box-shadow:0 1px 0 rgba(0,0,0,0.06);"></div>
<svg class="a" style="left:645.2px;top:199.05px;" width="14" height="14" viewBox="0 0 14 14"><path d="M3.5,3 H8.5 L10.5,5 V9 H3.5 Z" fill="#fbfbfb" stroke="#9a9a9a" stroke-width="0.6"/><path d="M2,4.5 H4 V8 H12 V4.5 H11 V12 H2 Z" fill="#2f6db5"/><path d="M2,8.3 H12 V12 H2 Z" fill="#4f8fd8"/></svg>
<div style="left:667px;top:196.2px;width:19.600000000000023px;height:19.700000000000017px;background:linear-gradient(#f4f5f5,#e6e7e8);border:1px solid #b9bbbd;border-radius:2px;box-sizing:border-box;box-shadow:0 1px 0 rgba(0,0,0,0.06);"></div>
<svg class="a" style="left:669.8px;top:199.05px;" width="14" height="14" viewBox="0 0 14 14"><rect x="2.5" y="2.5" width="9" height="9.5" rx="0.8" fill="#1e1e1e"/><rect x="4" y="3" width="6" height="3.8" fill="#cfe3f5"/><rect x="4.5" y="8.5" width="5" height="3" fill="#6a6a6a"/></svg>
<div style="left:691.5px;top:196.2px;width:19.700000000000045px;height:19.700000000000017px;background:linear-gradient(#f4f5f5,#e6e7e8);border:1px solid #b9bbbd;border-radius:2px;box-sizing:border-box;box-shadow:0 1px 0 rgba(0,0,0,0.06);"></div>
<svg class="a" style="left:694.35px;top:199.05px;" width="14" height="14" viewBox="0 0 14 14"><rect x="2.5" y="2.5" width="9" height="9.5" rx="0.8" fill="#1e1e1e"/><rect x="4" y="3" width="6" height="3.8" fill="#cfe3f5"/><path d="M4,12 L11,3.5" stroke="#d8b020" stroke-width="2.2"/><circle cx="11" cy="3.3" r="1" fill="#d02020"/></svg>
<div style="left:400.8px;top:221.8px;width:309.7px;height:132.39999999999998px;background:#fcfcfc;border:1px solid #c4c6c8;box-sizing:border-box;"></div>
<div style="left:401.8px;top:222.8px;width:307.7px;height:18.5px;background:#ecedee;border-bottom:1px solid #cfd1d2;box-sizing:border-box;"></div>
<div style="left:401.8px;top:222.8px;width:11.800000000000011px;height:130.39999999999998px;background:#ecedee;border-right:1px solid #cfd1d2;box-sizing:border-box;"></div>
<div style="left:413.6px;top:222.8px;width:55.099999999999966px;height:18.5px;background:#c6e0ef;border-bottom:1px solid #b7d3e4;box-sizing:border-box;"></div>
<div style="left:401.8px;top:241.3px;width:11.800000000000011px;height:20.0px;background:#c6e0ef;border-right:1px solid #b7d3e4;box-sizing:border-box;"></div>
<div style="left:413.6px;top:241.3px;width:55.099999999999966px;height:20.0px;background:#bedff4;"></div>
<div style="left:468.7px;top:222.8px;width:1.0px;height:58.5px;background:#cfd1d2;"></div>
<div style="left:523.5px;top:222.8px;width:1.0px;height:58.5px;background:#cfd1d2;"></div>
<div style="left:579.4px;top:222.8px;width:1.0px;height:58.5px;background:#cfd1d2;"></div>
<div style="left:634.5px;top:222.8px;width:1.0px;height:58.5px;background:#cfd1d2;"></div>
<div style="left:689.6px;top:222.8px;width:1.0px;height:58.5px;background:#cfd1d2;"></div>
<div style="left:413.6px;top:261.3px;width:295.9px;height:1.0px;background:#cfd1d2;"></div>
<div style="left:413.6px;top:281.3px;width:295.9px;height:1.0px;background:#cfd1d2;"></div>
<div style="left:401.8px;top:281.3px;width:11.800000000000011px;height:1.0px;background:#cfd1d2;"></div>
<div style="left:401.8px;top:261.3px;width:11.800000000000011px;height:1.0px;background:#cfd1d2;"></div>
<div class="t" style="left:291.15px;top:226.3px;width:300px;text-align:center;color:#31363b;font-size:8px;font-weight:bold;">Status</div>
<div class="t" style="left:346.1px;top:226.3px;width:300px;text-align:center;color:#31363b;font-size:8px;">Filter</div>
<div class="t" style="left:401.45000000000005px;top:226.3px;width:300px;text-align:center;color:#31363b;font-size:8px;">Type</div>
<div class="t" style="left:456.95000000000005px;top:226.3px;width:300px;text-align:center;color:#31363b;font-size:8px;">Bin</div>
<div class="t" style="left:512.05px;top:226.3px;width:300px;text-align:center;color:#31363b;font-size:8px;">Exp</div>
<div class="t" style="left:291.15px;top:240.9px;width:300px;text-align:center;color:#31363b;font-size:8px;">In Progress</div>
<div class="t" style="left:346.1px;top:240.9px;width:300px;text-align:center;color:#31363b;font-size:8px;">SII</div>
<div class="t" style="left:401.45000000000005px;top:240.9px;width:300px;text-align:center;color:#31363b;font-size:8px;">Light</div>
<div class="t" style="left:456.95000000000005px;top:240.9px;width:300px;text-align:center;color:#31363b;font-size:8px;">1x1</div>
<div class="t" style="left:512.05px;top:240.9px;width:300px;text-align:center;color:#31363b;font-size:8px;">60</div>
<div class="t" style="left:257.2px;top:246.7px;width:300px;text-align:center;color:#31363b;font-size:8px;">1</div>
<div class="t" style="left:291.15px;top:260.9px;width:300px;text-align:center;color:#31363b;font-size:8px;">Idle</div>
<div class="t" style="left:346.1px;top:260.9px;width:300px;text-align:center;color:#31363b;font-size:8px;">B</div>
<div class="t" style="left:401.45000000000005px;top:260.9px;width:300px;text-align:center;color:#31363b;font-size:8px;">Light</div>
<div class="t" style="left:456.95000000000005px;top:260.9px;width:300px;text-align:center;color:#31363b;font-size:8px;">1x1</div>
<div class="t" style="left:512.05px;top:260.9px;width:300px;text-align:center;color:#31363b;font-size:8px;">60</div>
<div class="t" style="left:257.2px;top:266.7px;width:300px;text-align:center;color:#31363b;font-size:8px;">2</div>
<div style="left:401.8px;top:340px;width:307.7px;height:13.199999999999989px;background:#fcfcfc;"></div>
<div style="left:414.6px;top:343.7px;width:282.5px;height:7.5px;background:#c0c2c4;border-radius:4px;"></div>
<div style="left:414.6px;top:343.7px;width:200.89999999999998px;height:7.5px;background:#74777a;border-radius:4px;"></div>
<svg class="a" style="left:403px;top:342px;" width="10" height="10" viewBox="0 0 10 10"><path d="M6.5,2 L3.5,5 L6.5,8" fill="none" stroke="#9a9da0" stroke-width="1"/></svg>
<svg class="a" style="left:699px;top:342px;" width="10" height="10" viewBox="0 0 10 10"><path d="M3.5,2 L6.5,5 L3.5,8" fill="none" stroke="#31363b" stroke-width="1.1"/></svg>
<div style="left:542.4px;top:366px;width:53.39999999999998px;height:19.30000000000001px;background:linear-gradient(#eceded,#e3e4e5);border:1px solid #c9cbcc;border-radius:2px;box-sizing:border-box;box-shadow:0 1px 0 rgba(0,0,0,0.06);"></div>
<div class="t" style="left:419.0999999999999px;top:370.1px;width:300px;text-align:center;color:#a7aaad;font-size:8px;">Preview</div>
<div style="left:600.7px;top:366px;width:57.09999999999991px;height:19.30000000000001px;background:linear-gradient(#eceded,#e3e4e5);border:1px solid #c9cbcc;border-radius:2px;box-sizing:border-box;box-shadow:0 1px 0 rgba(0,0,0,0.06);"></div>
<div class="t" style="left:479.25px;top:370.1px;width:300px;text-align:center;color:#a7aaad;font-size:8px;">Start Sequence</div>
<div style="left:662.7px;top:366px;width:53.39999999999998px;height:19.30000000000001px;background:linear-gradient(#f4f5f5,#e6e7e8);border:1px solid #b9bbbd;border-radius:2px;box-sizing:border-box;box-shadow:0 1px 0 rgba(0,0,0,0.06);"></div>
<div class="t" style="left:539.4000000000001px;top:370.1px;width:300px;text-align:center;color:#31363b;font-size:8px;">Stop</div>
<div style="left:63.5px;top:390.5px;width:658.0px;height:1.0px;background:#dcdedf;"></div>
<div style="left:69.4px;top:397.1px;width:224.99999999999997px;height:111.29999999999995px;border:1px solid #cfd1d2;border-radius:2px;box-sizing:border-box;background:#f1f2f3;"></div>
<div class="t" style="left:31px;top:398.9px;width:300px;text-align:center;color:#31363b;font-size:8px;">Filter</div>
<div class="t" style="left:73.8px;top:420.9px;color:#31363b;font-size:8px;">Device:</div>
<div style="left:101.7px;top:417.5px;width:188.0px;height:17.899999999999977px;background:#3daee9;border:1px solid #3498db;border-radius:2px;box-sizing:border-box;"></div>
<div class="t" style="left:105.7px;top:420.9px;color:#fcfcfc;font-size:8px;">SBIG CCD</div>
<svg class="a" style="left:276.7px;top:422.45px;" width="10" height="8" viewBox="0 0 10 8"><path d="M1.5,2.5 L5,6 L8.5,2.5" fill="none" stroke="#fcfcfc" stroke-width="1.3"/></svg>
<div class="t" style="left:73.8px;top:444.5px;color:#31363b;font-size:8px;">Filter:</div>
<div style="left:101.7px;top:441px;width:188.0px;height:17.899999999999977px;background:linear-gradient(#f1f2f2,#e4e5e6);border:1px solid #b9bbbd;border-radius:2px;box-sizing:border-box;box-shadow:0 1px 0 rgba(0,0,0,0.06);"></div>
<div class="t" style="left:105.7px;top:444.4px;color:#31363b;font-size:8px;">SII</div>
<svg class="a" style="left:276.7px;top:445.95px;" width="10" height="8" viewBox="0 0 10 8"><path d="M1.5,2.5 L5,6 L8.5,2.5" fill="none" stroke="#31363b" stroke-width="1.3"/></svg>
<div style="left:299.3px;top:397px;width:1.0px;height:111.39999999999998px;background:#d6d8d9;"></div>
<div style="left:306px;top:397.1px;width:12px;height:12.0px;background:#fcfcfc;border:1px solid #7f8285;border-radius:2px;box-sizing:border-box;"></div>
<div class="t" style="left:322px;top:397.8px;color:#31363b;font-size:8px;">Auto dark subtract</div>
<div style="left:306px;top:414.4px;width:12px;height:12.0px;background:#fcfcfc;border:1px solid #7f8285;border-radius:2px;box-sizing:border-box;"></div>
<div class="t" style="left:322px;top:415.1px;color:#31363b;font-size:8px;">Add ISO 8601 time stamp</div>
<div style="left:306px;top:431.6px;width:12px;height:12.0px;background:#fcfcfc;border:1px solid #7f8285;border-radius:2px;box-sizing:border-box;"></div>
<div class="t" style="left:322px;top:432.3px;color:#31363b;font-size:8px;">Display in FITS Viewer</div>
<div style="left:306px;top:452px;width:12px;height:12px;background:#fcfcfc;border:1px solid #d6d8d9;border-radius:2px;box-sizing:border-box;"></div>
<div class="t" style="left:322px;top:452.7px;color:#a7aaad;font-size:8px;">Maximum Guiding Deviation</div>
<div style="left:306px;top:475.5px;width:12px;height:12.0px;background:#fcfcfc;border:1px solid #7f8285;border-radius:2px;box-sizing:border-box;"></div>
<div class="t" style="left:322px;top:476.2px;color:#31363b;font-size:8px;">Autofocus if HFR &gt;</div>
<div style="left:306px;top:496.5px;width:12px;height:12.0px;background:#fcfcfc;border:1px solid #7f8285;border-radius:2px;box-sizing:border-box;"></div>
<div class="t" style="left:322px;top:497.2px;color:#31363b;font-size:8px;">Park When Complete</div>
<div style="left:419.5px;top:449.2px;width:41.10000000000002px;height:17.69999999999999px;background:#f3f4f4;border:1px solid #d3d5d6;border-radius:2px;box-sizing:border-box;"></div>
<div class="t" style="left:424.5px;top:452.5px;color:#a7aaad;font-size:8px;">2.00</div>
<svg class="a" style="left:448.6px;top:450.04999999999995px;" width="10" height="16" viewBox="0 0 10 16"><path d="M1.5,6 L5,2.5 L8.5,6" fill="none" stroke="#a7aaad" stroke-width="1.1"/><path d="M1.5,10 L5,13.5 L8.5,10" fill="none" stroke="#a7aaad" stroke-width="1.1"/></svg>
<div class="t" style="left:465px;top:450.5px;color:#31363b;font-size:8px;">°</div>
<div style="left:389.3px;top:472.6px;width:45.30000000000001px;height:18.099999999999966px;background:#fcfcfc;border:1px solid #bfc1c3;border-radius:2px;box-sizing:border-box;"></div>
<div class="t" style="left:394.3px;top:476.1px;color:#31363b;font-size:8px;">0.000</div>
<svg class="a" style="left:422.6px;top:473.65px;" width="10" height="16" viewBox="0 0 10 16"><path d="M1.5,6 L5,2.5 L8.5,6" fill="none" stroke="#31363b" stroke-width="1.1"/><path d="M1.5,10 L5,13.5 L8.5,10" fill="none" stroke="#a7aaad" stroke-width="1.1"/></svg>
<div class="t" style="left:439.5px;top:476.0px;color:#31363b;font-size:8px;">pixels</div>
<div style="left:490.7px;top:397px;width:1.0px;height:111.39999999999998px;background:#d6d8d9;"></div>
<div style="left:496.9px;top:396.3px;width:218.89999999999998px;height:112.09999999999997px;border:1px solid #cfd1d2;border-radius:2px;box-sizing:border-box;background:#f1f2f3;"></div>
<div class="t" style="left:456px;top:399.1px;width:300px;text-align:center;color:#31363b;font-size:8px;">Progress</div>
<div class="t" style="left:501.4px;top:417.6px;color:#31363b;font-size:8px;">Expose:</div>
<div style="left:534.2px;top:417.1px;width:32.5px;height:12.399999999999977px;background:#fcfcfc;border:1px solid #31363b;box-sizing:border-box;"></div>
<div class="t" style="left:537px;top:417.8px;color:#31363b;font-size:8px;">47.00</div>
<div class="t" style="left:571.2px;top:417.6px;color:#31363b;font-size:8px;">seconds left</div>
<svg class="a" style="left:630px;top:416.5px;" width="12" height="12" viewBox="0 0 12 12"><path d="M8.10,6.65 L11.35,7.65" stroke="#1e1e1e" stroke-opacity="1.00" stroke-width="1.2"/><path d="M8.15,5.51 L11.46,4.76" stroke="#1e1e1e" stroke-opacity="0.91" stroke-width="1.2"/><path d="M7.61,4.50 L10.11,2.19" stroke="#1e1e1e" stroke-opacity="0.82" stroke-width="1.2"/><path d="M6.65,3.90 L7.65,0.65" stroke="#1e1e1e" stroke-opacity="0.73" stroke-width="1.2"/><path d="M5.51,3.85 L4.76,0.54" stroke="#1e1e1e" stroke-opacity="0.64" stroke-width="1.2"/><path d="M4.50,4.39 L2.19,1.89" stroke="#1e1e1e" stroke-opacity="0.55" stroke-width="1.2"/><path d="M3.90,5.35 L0.65,4.35" stroke="#1e1e1e" stroke-opacity="0.46" stroke-width="1.2"/><path d="M3.85,6.49 L0.54,7.24" stroke="#1e1e1e" stroke-opacity="0.37" stroke-width="1.2"/><path d="M4.39,7.50 L1.89,9.81" stroke="#1e1e1e" stroke-opacity="0.28" stroke-width="1.2"/><path d="M5.35,8.10 L4.35,11.35" stroke="#1e1e1e" stroke-opacity="0.19" stroke-width="1.2"/><path d="M6.49,8.15 L7.24,11.46" stroke="#1e1e1e" stroke-opacity="0.15" stroke-width="1.2"/><path d="M7.50,7.61 L9.81,10.11" stroke="#1e1e1e" stroke-opacity="0.15" stroke-width="1.2"/></svg>
<div class="t" style="left:501.4px;top:434.2px;color:#31363b;font-size:8px;">Progress:</div>
<div style="left:534.2px;top:434px;width:32.5px;height:11.399999999999977px;background:#fcfcfc;border:1px solid #31363b;box-sizing:border-box;"></div>
<div class="t" style="left:537px;top:434.4px;color:#31363b;font-size:8px;">1</div>
<div class="t" style="left:576.9px;top:434.2px;color:#31363b;font-size:8px;">of</div>
<div style="left:593.1px;top:434px;width:32.89999999999998px;height:11.399999999999977px;background:#fcfcfc;border:1px solid #31363b;box-sizing:border-box;"></div>
<div class="t" style="left:596px;top:434.4px;color:#31363b;font-size:8px;">10</div>
<div class="t" style="left:629.8px;top:434.2px;color:#31363b;font-size:8px;">completed</div>
<div style="left:502.5px;top:454.8px;width:185.79999999999995px;height:4.199999999999989px;background:#c0c2c4;border-radius:2px;"></div>
<div style="left:502.5px;top:454.8px;width:18.5px;height:4.199999999999989px;background:#3daee9;border-radius:2px;"></div>
<div class="t" style="left:693.2px;top:451.5px;color:#31363b;font-size:8px;">10%</div>
<div style="left:62.5px;top:563.2px;width:659.7px;height:47.799999999999955px;background:#fcfcfc;border:1px solid #c4c6c8;border-radius:2px;box-sizing:border-box;"></div>
<div class="t" style="left:65.7px;top:565.9px;color:#31363b;font-size:8px;letter-spacing:-0.28px;">2015-01-29T10:56:32 Capturing image...</div>
<div class="t" style="left:65.7px;top:575.9px;color:#31363b;font-size:8px;letter-spacing:-0.28px;">2015-01-29T10:56:32 Received image 1 out of 10.</div>
<div class="t" style="left:65.7px;top:585.9px;color:#31363b;font-size:8px;letter-spacing:-0.28px;">2015-01-29T10:55:32 Capturing image...</div>
<div class="t" style="left:65.7px;top:595.9px;color:#31363b;font-size:8px;letter-spacing:-0.28px;">2015-01-29T10:55:32 Changing filter to SII...</div>
<div style="left:62.5px;top:620.1px;width:12.0px;height:12.0px;background:#fcfcfc;border:1px solid #3daee9;border-radius:2px;box-sizing:border-box;box-shadow:0 0 1px 0.5px rgba(61,174,233,0.35);"></div>
<div style="left:65.0px;top:622.6px;width:7.0px;height:7.0px;background:#3daee9;border-radius:1px;"></div>
<div class="t" style="left:78.5px;top:620.8px;color:#31363b;font-size:8px;">Enable logging</div>
<div style="left:669.4px;top:617.2px;width:52.80000000000007px;height:18.799999999999955px;background:linear-gradient(#f4f5f5,#e6e7e8);border:1px solid #b9bbbd;border-radius:2px;box-sizing:border-box;box-shadow:0 1px 0 rgba(0,0,0,0.06);"></div>
<div class="t" style="left:545.8px;top:621.1px;width:300px;text-align:center;color:#31363b;font-size:8px;">Clear</div>
<div style="left:0px;top:688px;width:1248px;height:14px;background:linear-gradient(#f4f4f4,#e0e0e0 70%,#cfcfcf);"></div>
<div class="t" style="left:4px;top:690.0px;color:#31363b;font-size:8px;letter-spacing:-0.3px;">2015-01-29T07:56:32: Starting 60 sec exposure</div>
<div class="t" style="left:946px;top:690.0px;width:300px;text-align:right;color:#31363b;font-size:8px;letter-spacing:-0.45px;white-space:pre;">+14° 36&#x27; 20&quot;, +43° 20&#x27; 36&quot;   22h 04m 11s, +71° 35&#x27; 45&quot;</div>
</body></html>
